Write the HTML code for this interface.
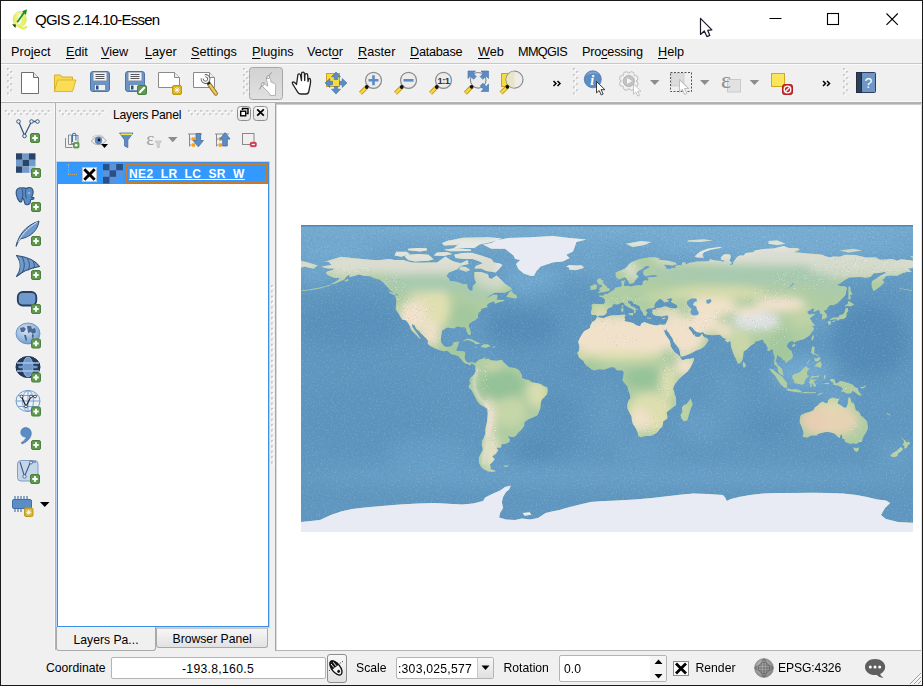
<!DOCTYPE html><html><head><meta charset="utf-8"><title>QGIS 2.14.10-Essen</title><style>
html,body{margin:0;padding:0}
body{width:923px;height:686px;position:relative;overflow:hidden;background:#f0f0f0;font-family:"Liberation Sans",sans-serif;color:#000}
.a{position:absolute}
.t{position:absolute;white-space:nowrap;line-height:1}
.menu{font-size:12.700px;top:45.700px}
.menu u{text-decoration:underline;text-underline-offset:1.500px;text-decoration-skip-ink:none;text-decoration-thickness:1px}
.tah{font-size:12px}
svg{position:absolute;overflow:visible}
</style></head><body>
<div class="a" style="left:0;top:0;width:923px;height:39px;background:#fff"></div>
<svg style="left:8px;top:6px" width="24" height="26" viewBox="0 0 24 26" ><defs><linearGradient id="qg" x1="0" y1="0" x2="1" y2="0"><stop offset="0" stop-color="#dfe95a"/><stop offset=".35" stop-color="#f3f88e"/><stop offset="1" stop-color="#e3ec5c"/></linearGradient></defs>
<path d="M11.700 5.600a6.700 7.700 0 1 0 .01 0zM12.300 7.300a2.500 5.800 8 1 1 -.01 0z" fill="url(#qg)" fill-rule="evenodd" stroke="#c9d64a" stroke-width=".4"/>
<path d="M10 19.300C12.500 22.800 16.200 23.600 18.900 20.300" fill="none" stroke="#e6ee62" stroke-width="2.500"/>
<path d="M9.300 16.200 16.200 6.300" stroke="#1d9a1d" stroke-width="1.900" fill="none"/>
<path d="M19 3.200 14.100 5.200 18 9z" fill="#169016"/>
<path d="M4.100 18.300 7.900 18.500 7.400 21.900z" fill="#0f3f0f"/></svg>
<div class="t" id="title" style="left:35px;top:11.900px;font-size:15px;letter-spacing:-0.780px">QGIS 2.14.10-Essen</div>
<svg style="left:0px;top:0px" width="923" height="38" viewBox="0 0 923 38" ><path d="M769.500 18.500h12" stroke="#000" stroke-width="1" fill="none"/>
<rect x="827.500" y="13.500" width="11" height="11" fill="none" stroke="#000" stroke-width="1.100"/>
<path d="M886.500 13.500l11.300 11.300m0-11.300l-11.300 11.300" stroke="#000" stroke-width="1.100" fill="none"/></svg>
<svg style="left:0px;top:0px" width="923" height="40" viewBox="0 0 923 40" ><path d="M700.500 18.300V34.500L704.300 31L706.900 36.600L709.800 35.400L707.700 30.300L711.900 29.900z" fill="#fff" stroke="#1a1a2a" stroke-width="1.200" stroke-linejoin="round"/></svg>
<div class="a" style="left:0;top:39px;width:923px;height:24px;background:#f0f0f0"></div>
<div class="t menu" id="m0" style="left:11px">Pro<u>j</u>ect</div><div class="t menu" id="m1" style="left:66px"><u>E</u>dit</div><div class="t menu" id="m2" style="left:101px"><u>V</u>iew</div><div class="t menu" id="m3" style="left:145px"><u>L</u>ayer</div><div class="t menu" id="m4" style="left:191px"><u>S</u>ettings</div><div class="t menu" id="m5" style="left:252px"><u>P</u>lugins</div><div class="t menu" id="m6" style="left:307px">Vect<u>o</u>r</div><div class="t menu" id="m7" style="left:358px"><u>R</u>aster</div><div class="t menu" id="m8" style="left:410px"><span style="letter-spacing:-0.25px"><u>D</u>atabase</span></div><div class="t menu" id="m9" style="left:478px"><u>W</u>eb</div><div class="t menu" id="m10" style="left:518px"><span style="letter-spacing:-0.65px">MMQGIS</span></div><div class="t menu" id="m11" style="left:582px"><span style="letter-spacing:-0.2px">Pro<u>c</u>essing</span></div><div class="t menu" id="m12" style="left:658px"><u>H</u>elp</div>
<div class="a" style="left:1px;top:63px;width:921px;height:1px;background:#c9c9c9"></div>
<div class="a" style="left:1px;top:64px;width:921px;height:1px;background:#fbfbfb"></div>
<svg style="left:7px;top:67.5px" width="7" height="33" viewBox="0 0 7 33" ><rect x="1" y="1" width="2" height="2" fill="#fff"/><rect x="0" y="0" width="2" height="2" fill="#bdbdbd" opacity=".85"/><rect x="1" y="1" width="1" height="1" fill="#e4e4e4"/><rect x="4.2" y="4" width="2" height="2" fill="#fff"/><rect x="3.2" y="3" width="2" height="2" fill="#bdbdbd" opacity=".85"/><rect x="4.2" y="4" width="1" height="1" fill="#e4e4e4"/><rect x="1" y="7.1" width="2" height="2" fill="#fff"/><rect x="0" y="6.1" width="2" height="2" fill="#bdbdbd" opacity=".85"/><rect x="1" y="7.1" width="1" height="1" fill="#e4e4e4"/><rect x="4.2" y="10.1" width="2" height="2" fill="#fff"/><rect x="3.2" y="9.1" width="2" height="2" fill="#bdbdbd" opacity=".85"/><rect x="4.2" y="10.1" width="1" height="1" fill="#e4e4e4"/><rect x="1" y="13.2" width="2" height="2" fill="#fff"/><rect x="0" y="12.2" width="2" height="2" fill="#bdbdbd" opacity=".85"/><rect x="1" y="13.2" width="1" height="1" fill="#e4e4e4"/><rect x="4.2" y="16.2" width="2" height="2" fill="#fff"/><rect x="3.2" y="15.2" width="2" height="2" fill="#bdbdbd" opacity=".85"/><rect x="4.2" y="16.2" width="1" height="1" fill="#e4e4e4"/><rect x="1" y="19.3" width="2" height="2" fill="#fff"/><rect x="0" y="18.3" width="2" height="2" fill="#bdbdbd" opacity=".85"/><rect x="1" y="19.3" width="1" height="1" fill="#e4e4e4"/><rect x="4.2" y="22.3" width="2" height="2" fill="#fff"/><rect x="3.2" y="21.3" width="2" height="2" fill="#bdbdbd" opacity=".85"/><rect x="4.2" y="22.3" width="1" height="1" fill="#e4e4e4"/><rect x="1" y="25.4" width="2" height="2" fill="#fff"/><rect x="0" y="24.4" width="2" height="2" fill="#bdbdbd" opacity=".85"/><rect x="1" y="25.4" width="1" height="1" fill="#e4e4e4"/></svg><svg style="left:0px;top:0px" width="923" height="104" viewBox="0 0 923 104" ><path d="M21.500 72.500h12l5 5v16h-17z" fill="#fff" stroke="#6e6e6e"/><path d="M33.500 72.500v5h5" fill="#e8e8e8" stroke="#6e6e6e"/><path d="M54.500 91.500v-16.500h6l1.500 2h10.500v3" fill="#f7d84f" stroke="#d4b02a"/><path d="M54.500 91.500l3-11.500h18.500l-3.500 11.500z" fill="#fbdc55" stroke="#d9b63a"/><rect x="90.5" y="71.500" width="19" height="20" rx="2.500" fill="#6b94c4" stroke="#4c74a6"/><rect x="93.5" y="72.500" width="13" height="8" fill="#f4f4f4" stroke="#bbb" stroke-width=".5"/><path d="M95.5 74.500h9M95.5 76.500h9M95.5 78.500h9" stroke="#555" stroke-width="1"/><rect x="94.5" y="84.500" width="11" height="6" fill="#efefef" stroke="#4c74a6" stroke-width=".6"/><rect x="96" y="85.500" width="2.500" height="4" fill="#2d4f7c"/><rect x="125.5" y="71.500" width="19" height="20" rx="2.500" fill="#6b94c4" stroke="#4c74a6"/><rect x="128.5" y="72.500" width="13" height="8" fill="#f4f4f4" stroke="#bbb" stroke-width=".5"/><path d="M130.5 74.500h9M130.5 76.500h9M130.5 78.500h9" stroke="#555" stroke-width="1"/><rect x="129.5" y="84.500" width="11" height="6" fill="#efefef" stroke="#4c74a6" stroke-width=".6"/><rect x="131" y="85.500" width="2.500" height="4" fill="#2d4f7c"/><rect x="137.500" y="85.500" width="9" height="9" rx="1.500" fill="#5f9a4f" stroke="#4a7f3c"/><path d="M139.800 92.200l4.400-4.400" stroke="#fff" stroke-width="2.200" stroke-linecap="round"/><path d="M158.500 72.500h16l5 5v10h-21z" fill="#fff" stroke="#8a8a8a"/><path d="M174.500 72.500v5h5" fill="#eee" stroke="#8a8a8a"/><g transform="translate(172,85)"><rect x=".5" y=".5" width="9" height="9" rx="1.500" fill="#d9b11c" stroke="#c09a12"/><path d="M5 1.9V8.1M1.9 5H8.1M2.7 2.7L7.3 7.3M7.3 2.7L2.7 7.3" stroke="#fff" stroke-width=".850" fill="none"/></g><path d="M193.500 72.500h16l5 5v10h-21z" fill="#fff" stroke="#8a8a8a"/><path d="M209.500 72.500v5h5" fill="#eee" stroke="#8a8a8a"/><path d="M209 84l6.800 9.500" stroke="#8a6d1c" stroke-width="4.200" stroke-linecap="round"/><path d="M209 84l6.800 9.500" stroke="#ecc95e" stroke-width="2.400" stroke-linecap="round"/><path d="M207.300 81.300l2 2.800" stroke="#1a1a1a" stroke-width="3.200"/><path d="M204.930 75.750A3.300 3.300 0 1 1 202.250 78.430" fill="none" stroke="#5a5a5a" stroke-width="3.200"/><path d="M204.930 75.750A3.300 3.300 0 1 1 202.250 78.430" fill="none" stroke="#f4f4f4" stroke-width="1.500"/><defs><linearGradient id="pr" x1="0" y1="0" x2="0" y2="1"><stop offset="0" stop-color="#d2d2d2"/><stop offset="1" stop-color="#e0e0e0"/></linearGradient></defs><rect x="249.500" y="67.500" width="33" height="32" rx="3" fill="url(#pr)" stroke="#a6a6a6"/><path d="M268 76.500C269.500 76.500 270.300 78 270.500 79.500L271 82L274 83.200C275.300 83.800 275.700 84.800 275.700 86L275.500 95.300L270.300 95.600L269 92.800L263 87C261.800 85.800 262 84.200 263.300 84C264.300 83.800 265 84.300 266 85L267.800 86.200L266.600 79.500C266.300 77.800 266.800 76.500 268 76.500Z" fill="#fff" stroke="#a2a2a2" stroke-width=".8" stroke-linejoin="round"/><path d="M271.800 72.300L266 79M264.200 82.200L259.300 89.400" stroke="#8a8a8a" stroke-width=".9"/><circle cx="268.200" cy="77.200" r="1.400" fill="#f2f2f2" stroke="#8a8a8a" stroke-width=".7"/><circle cx="262.600" cy="84.300" r="1.400" fill="#f2f2f2" stroke="#8a8a8a" stroke-width=".7"/><path d="M296.500 84.500c-1.200-1.700-3.300-3.300-4-2.300-.8 1 .6 2.700 1.700 4.300l3.300 5.300c.8 1.300 2 2.200 3.500 2.200h5c1.600 0 2.500-1 2.800-2.500l1.500-7.500c.4-2 .4-5.500-.6-5.700-1.100-.2-1.500 1.500-1.700 3.200l-.3-6c0-1.200-.7-1.800-1.400-1.800-.8 0-1.300.7-1.400 1.800l-.2 5-.3-6.700c0-1-.7-1.600-1.500-1.600-.8 0-1.400.7-1.400 1.700l0 6.700-1-5.400c-.2-1-.9-1.500-1.600-1.400-.8.100-1.200.9-1.100 1.900z" fill="#fff" stroke="#222" stroke-width="1.300" stroke-linejoin="round"/><rect x="326.500" y="73.500" width="13" height="13" fill="#f7dc3f" stroke="#c9a227"/><path d="M336 72l4.500 4.800h-2.800v2.700h-3.400v-2.700h-2.800zM336 94l4.500-4.800h-2.800v-2.700h-3.400v2.700h-2.800zM325 83l4.800-4.500v2.800h2.700v3.400h-2.700v2.800zM347 83l-4.800-4.500v2.800h-2.700v3.400h2.700v2.800z" fill="#5b8cc4" stroke="#3f6fa8" stroke-width=".6"/><path d="M366.78 87.02l-6.300 6.300" stroke="#c39a1e" stroke-width="4.200" stroke-linecap="butt"/><path d="M366.63 87.17l-6 6" stroke="#f7d63e" stroke-width="2.400"/><circle cx="373.5" cy="80.3" r="8" fill="#ececec" stroke="#8a8a8a" stroke-width="1.200"/><circle cx="366.78" cy="87.02" r="1.900" fill="#111"/><path d="M373.500 75.300v10M368.500 80.300h10" stroke="#5b8cc4" stroke-width="2.600"/><path d="M401.78 87.02l-6.300 6.300" stroke="#c39a1e" stroke-width="4.200" stroke-linecap="butt"/><path d="M401.63 87.17l-6 6" stroke="#f7d63e" stroke-width="2.400"/><circle cx="408.5" cy="80.3" r="8" fill="#ececec" stroke="#8a8a8a" stroke-width="1.200"/><circle cx="401.78" cy="87.02" r="1.900" fill="#111"/><path d="M403.500 80.300h10" stroke="#5b8cc4" stroke-width="2.600"/><path d="M436.78 87.02l-6.300 6.300" stroke="#c39a1e" stroke-width="4.200" stroke-linecap="butt"/><path d="M436.63 87.17l-6 6" stroke="#f7d63e" stroke-width="2.400"/><circle cx="443.5" cy="80.3" r="8" fill="#ececec" stroke="#8a8a8a" stroke-width="1.200"/><circle cx="436.78" cy="87.02" r="1.900" fill="#111"/><text x="443.500" y="84" font-family="Liberation Sans, sans-serif" font-size="9.500" font-weight="bold" text-anchor="middle" fill="#333" letter-spacing="-.5">1:1</text><path d="M471.648 86.852l-6.300 6.300" stroke="#c39a1e" stroke-width="4.200" stroke-linecap="butt"/><path d="M471.498 87.002l-6 6" stroke="#f7d63e" stroke-width="2.400"/><circle cx="478.2" cy="80.3" r="7.8" fill="#ececec" stroke="#8a8a8a" stroke-width="1.200"/><circle cx="471.648" cy="86.852" r="1.900" fill="#111"/><path d="M468 71h7.500l-2.400 2.400 3.200 3.200-2.700 2.700-3.200-3.200-2.400 2.400zM488.500 71v7.500l-2.400-2.400-3.200 3.200-2.700-2.700 3.200-3.200-2.400-2.400zM488.500 91.500h-7.500l2.400-2.400-3.200-3.200 2.700-2.700 3.200 3.200 2.400-2.400z" fill="#5b8cc4" stroke="#3f6fa8" stroke-width=".6"/><rect x="501.500" y="73.500" width="10" height="13" fill="#f7dc3f" stroke="#c9a227"/><path d="M507.36 86.74l-6.300 6.300" stroke="#c39a1e" stroke-width="4.200" stroke-linecap="butt"/><path d="M507.21 86.89l-6 6" stroke="#f7d63e" stroke-width="2.400"/><circle cx="514.5" cy="79.6" r="8.5" fill="#ececec" stroke="#8a8a8a" stroke-width="1.200"/><circle cx="507.36" cy="86.74" r="1.900" fill="#111"/><path d="M514.500 71.300a8.300 8.300 0 0 0 0 16.600z" fill="#e9e3bf" opacity=".9"/><path d="M553.500 81l2.500 2.500-2.500 2.500M557.500 81l2.500 2.500-2.500 2.500" fill="none" stroke="#000" stroke-width="1.500"/><circle cx="592.800" cy="79.300" r="8.500" fill="#5b8cc4" stroke="#4c7ab3" stroke-width=".8"/><path d="M586 76a7.500 7.500 0 0 1 13-1.500c-4-2-9-1.500-13 1.500z" fill="#8fb4dd" opacity=".7"/><text x="592.300" y="84.500" font-family="Liberation Serif, serif" font-style="italic" font-weight="bold" font-size="14" text-anchor="middle" fill="#fff">i</text><path transform="translate(596.5,81.5) scale(0.95)" d="M0 0v12l2.800-2.500 2.200 4.700 2-1-2.200-4.600h4z" fill="#fff" stroke="#333" stroke-width="1" stroke-linejoin="round"/><circle cx="635.36" cy="83.72" r="2.700" fill="#f1f1f1" stroke="#b5b5b5" stroke-width=".9"/><circle cx="631.52" cy="87.56" r="2.700" fill="#f1f1f1" stroke="#b5b5b5" stroke-width=".9"/><circle cx="626.08" cy="87.56" r="2.700" fill="#f1f1f1" stroke="#b5b5b5" stroke-width=".9"/><circle cx="622.24" cy="83.72" r="2.700" fill="#f1f1f1" stroke="#b5b5b5" stroke-width=".9"/><circle cx="622.24" cy="78.28" r="2.700" fill="#f1f1f1" stroke="#b5b5b5" stroke-width=".9"/><circle cx="626.08" cy="74.44" r="2.700" fill="#f1f1f1" stroke="#b5b5b5" stroke-width=".9"/><circle cx="631.52" cy="74.44" r="2.700" fill="#f1f1f1" stroke="#b5b5b5" stroke-width=".9"/><circle cx="635.36" cy="78.28" r="2.700" fill="#f1f1f1" stroke="#b5b5b5" stroke-width=".9"/><circle cx="628.800" cy="81" r="7.400" fill="#f1f1f1"/><circle cx="628.800" cy="81" r="5.600" fill="#c2c2c2" stroke="#adadad" stroke-width=".8"/><path d="M627 78l5.200 3-5.200 3z" fill="#f6f6f6"/><path transform="translate(633.5,84) scale(0.85)" d="M0 0v12l2.800-2.500 2.200 4.700 2-1-2.200-4.600h4z" fill="#fff" stroke="#b8b8b8" stroke-width="1" stroke-linejoin="round"/><path d="M650 80h9.5l-4.75 5z" fill="#8c8c8c"/><rect x="670.500" y="72.500" width="21" height="19" fill="#efefef" stroke="#555" stroke-dasharray="2 1.500" stroke-width="1"/><rect x="671.500" y="73.500" width="12.500" height="12.500" fill="#dcdcdc" stroke="#c4c4c4" stroke-width=".6"/><path transform="translate(679.5,79.5) scale(1.05)" d="M0 0v12l2.800-2.500 2.200 4.700 2-1-2.200-4.600h4z" fill="#fff" stroke="#c0c0c0" stroke-width="1" stroke-linejoin="round"/><path d="M700 80h9.5l-4.75 5z" fill="#8c8c8c"/><rect x="727.500" y="79.500" width="13" height="12.500" fill="#e2e2e2" stroke="#cacaca"/><text x="721" y="87.500" font-family="Liberation Serif, serif" font-size="24" fill="#8f8f8f">ε</text><path d="M749.7 80h9.5l-4.75 5z" fill="#8c8c8c"/><rect x="771.500" y="73.500" width="13" height="13" fill="#fbe55a" stroke="#cfa91f"/><rect x="782.500" y="84.500" width="10" height="10" rx="2" fill="#d9262c" stroke="#b51b20"/><circle cx="787.500" cy="89.500" r="3.300" fill="none" stroke="#fff" stroke-width="1.300"/><path d="M785.300 91.700l4.400-4.400" stroke="#fff" stroke-width="1.300"/><path d="M823 81l2.500 2.500-2.500 2.500M827 81l2.500 2.500-2.500 2.500" fill="none" stroke="#000" stroke-width="1.500"/><rect x="856.500" y="72.500" width="19" height="20" rx="1" fill="#6c97c6" stroke="#30405a"/><rect x="856.500" y="72.500" width="5" height="20" fill="#2e3f57" stroke="#222f42"/><text x="868.500" y="88" font-family="Liberation Sans, sans-serif" font-size="14" text-anchor="middle" fill="#fff">?</text></svg><svg style="left:243px;top:67.5px" width="7" height="33" viewBox="0 0 7 33" ><rect x="1" y="1" width="2" height="2" fill="#fff"/><rect x="0" y="0" width="2" height="2" fill="#bdbdbd" opacity=".85"/><rect x="1" y="1" width="1" height="1" fill="#e4e4e4"/><rect x="4.2" y="4" width="2" height="2" fill="#fff"/><rect x="3.2" y="3" width="2" height="2" fill="#bdbdbd" opacity=".85"/><rect x="4.2" y="4" width="1" height="1" fill="#e4e4e4"/><rect x="1" y="7.1" width="2" height="2" fill="#fff"/><rect x="0" y="6.1" width="2" height="2" fill="#bdbdbd" opacity=".85"/><rect x="1" y="7.1" width="1" height="1" fill="#e4e4e4"/><rect x="4.2" y="10.1" width="2" height="2" fill="#fff"/><rect x="3.2" y="9.1" width="2" height="2" fill="#bdbdbd" opacity=".85"/><rect x="4.2" y="10.1" width="1" height="1" fill="#e4e4e4"/><rect x="1" y="13.2" width="2" height="2" fill="#fff"/><rect x="0" y="12.2" width="2" height="2" fill="#bdbdbd" opacity=".85"/><rect x="1" y="13.2" width="1" height="1" fill="#e4e4e4"/><rect x="4.2" y="16.2" width="2" height="2" fill="#fff"/><rect x="3.2" y="15.2" width="2" height="2" fill="#bdbdbd" opacity=".85"/><rect x="4.2" y="16.2" width="1" height="1" fill="#e4e4e4"/><rect x="1" y="19.3" width="2" height="2" fill="#fff"/><rect x="0" y="18.3" width="2" height="2" fill="#bdbdbd" opacity=".85"/><rect x="1" y="19.3" width="1" height="1" fill="#e4e4e4"/><rect x="4.2" y="22.3" width="2" height="2" fill="#fff"/><rect x="3.2" y="21.3" width="2" height="2" fill="#bdbdbd" opacity=".85"/><rect x="4.2" y="22.3" width="1" height="1" fill="#e4e4e4"/><rect x="1" y="25.4" width="2" height="2" fill="#fff"/><rect x="0" y="24.4" width="2" height="2" fill="#bdbdbd" opacity=".85"/><rect x="1" y="25.4" width="1" height="1" fill="#e4e4e4"/></svg><svg style="left:573px;top:67.5px" width="7" height="33" viewBox="0 0 7 33" ><rect x="1" y="1" width="2" height="2" fill="#fff"/><rect x="0" y="0" width="2" height="2" fill="#bdbdbd" opacity=".85"/><rect x="1" y="1" width="1" height="1" fill="#e4e4e4"/><rect x="4.2" y="4" width="2" height="2" fill="#fff"/><rect x="3.2" y="3" width="2" height="2" fill="#bdbdbd" opacity=".85"/><rect x="4.2" y="4" width="1" height="1" fill="#e4e4e4"/><rect x="1" y="7.1" width="2" height="2" fill="#fff"/><rect x="0" y="6.1" width="2" height="2" fill="#bdbdbd" opacity=".85"/><rect x="1" y="7.1" width="1" height="1" fill="#e4e4e4"/><rect x="4.2" y="10.1" width="2" height="2" fill="#fff"/><rect x="3.2" y="9.1" width="2" height="2" fill="#bdbdbd" opacity=".85"/><rect x="4.2" y="10.1" width="1" height="1" fill="#e4e4e4"/><rect x="1" y="13.2" width="2" height="2" fill="#fff"/><rect x="0" y="12.2" width="2" height="2" fill="#bdbdbd" opacity=".85"/><rect x="1" y="13.2" width="1" height="1" fill="#e4e4e4"/><rect x="4.2" y="16.2" width="2" height="2" fill="#fff"/><rect x="3.2" y="15.2" width="2" height="2" fill="#bdbdbd" opacity=".85"/><rect x="4.2" y="16.2" width="1" height="1" fill="#e4e4e4"/><rect x="1" y="19.3" width="2" height="2" fill="#fff"/><rect x="0" y="18.3" width="2" height="2" fill="#bdbdbd" opacity=".85"/><rect x="1" y="19.3" width="1" height="1" fill="#e4e4e4"/><rect x="4.2" y="22.3" width="2" height="2" fill="#fff"/><rect x="3.2" y="21.3" width="2" height="2" fill="#bdbdbd" opacity=".85"/><rect x="4.2" y="22.3" width="1" height="1" fill="#e4e4e4"/><rect x="1" y="25.4" width="2" height="2" fill="#fff"/><rect x="0" y="24.4" width="2" height="2" fill="#bdbdbd" opacity=".85"/><rect x="1" y="25.4" width="1" height="1" fill="#e4e4e4"/></svg><svg style="left:843px;top:67.5px" width="7" height="33" viewBox="0 0 7 33" ><rect x="1" y="1" width="2" height="2" fill="#fff"/><rect x="0" y="0" width="2" height="2" fill="#bdbdbd" opacity=".85"/><rect x="1" y="1" width="1" height="1" fill="#e4e4e4"/><rect x="4.2" y="4" width="2" height="2" fill="#fff"/><rect x="3.2" y="3" width="2" height="2" fill="#bdbdbd" opacity=".85"/><rect x="4.2" y="4" width="1" height="1" fill="#e4e4e4"/><rect x="1" y="7.1" width="2" height="2" fill="#fff"/><rect x="0" y="6.1" width="2" height="2" fill="#bdbdbd" opacity=".85"/><rect x="1" y="7.1" width="1" height="1" fill="#e4e4e4"/><rect x="4.2" y="10.1" width="2" height="2" fill="#fff"/><rect x="3.2" y="9.1" width="2" height="2" fill="#bdbdbd" opacity=".85"/><rect x="4.2" y="10.1" width="1" height="1" fill="#e4e4e4"/><rect x="1" y="13.2" width="2" height="2" fill="#fff"/><rect x="0" y="12.2" width="2" height="2" fill="#bdbdbd" opacity=".85"/><rect x="1" y="13.2" width="1" height="1" fill="#e4e4e4"/><rect x="4.2" y="16.2" width="2" height="2" fill="#fff"/><rect x="3.2" y="15.2" width="2" height="2" fill="#bdbdbd" opacity=".85"/><rect x="4.2" y="16.2" width="1" height="1" fill="#e4e4e4"/><rect x="1" y="19.3" width="2" height="2" fill="#fff"/><rect x="0" y="18.3" width="2" height="2" fill="#bdbdbd" opacity=".85"/><rect x="1" y="19.3" width="1" height="1" fill="#e4e4e4"/><rect x="4.2" y="22.3" width="2" height="2" fill="#fff"/><rect x="3.2" y="21.3" width="2" height="2" fill="#bdbdbd" opacity=".85"/><rect x="4.2" y="22.3" width="1" height="1" fill="#e4e4e4"/><rect x="1" y="25.4" width="2" height="2" fill="#fff"/><rect x="0" y="24.4" width="2" height="2" fill="#bdbdbd" opacity=".85"/><rect x="1" y="25.4" width="1" height="1" fill="#e4e4e4"/></svg>
<div class="a" style="left:1px;top:101px;width:921px;height:1px;background:#f9f9f9"></div><div class="a" style="left:1px;top:102px;width:921px;height:1px;background:#b2b2b2"></div>
<div class="a" style="left:54px;top:103px;width:1px;height:547px;background:#f8f8f8"></div><div class="a" style="left:55px;top:103px;width:1px;height:547px;background:#b2b2b2"></div><svg style="left:4.5px;top:109.5px" width="51" height="7" viewBox="0 0 51 7" ><rect x="1" y="1" width="2" height="2" fill="#fff"/><rect x="0" y="0" width="2" height="2" fill="#bdbdbd" opacity=".85"/><rect x="1" y="1" width="1" height="1" fill="#e4e4e4"/><rect x="4" y="4.2" width="2" height="2" fill="#fff"/><rect x="3" y="3.2" width="2" height="2" fill="#bdbdbd" opacity=".85"/><rect x="4" y="4.2" width="1" height="1" fill="#e4e4e4"/><rect x="7.1" y="1" width="2" height="2" fill="#fff"/><rect x="6.1" y="0" width="2" height="2" fill="#bdbdbd" opacity=".85"/><rect x="7.1" y="1" width="1" height="1" fill="#e4e4e4"/><rect x="10.1" y="4.2" width="2" height="2" fill="#fff"/><rect x="9.1" y="3.2" width="2" height="2" fill="#bdbdbd" opacity=".85"/><rect x="10.1" y="4.2" width="1" height="1" fill="#e4e4e4"/><rect x="13.2" y="1" width="2" height="2" fill="#fff"/><rect x="12.2" y="0" width="2" height="2" fill="#bdbdbd" opacity=".85"/><rect x="13.2" y="1" width="1" height="1" fill="#e4e4e4"/><rect x="16.2" y="4.2" width="2" height="2" fill="#fff"/><rect x="15.2" y="3.2" width="2" height="2" fill="#bdbdbd" opacity=".85"/><rect x="16.2" y="4.2" width="1" height="1" fill="#e4e4e4"/><rect x="19.3" y="1" width="2" height="2" fill="#fff"/><rect x="18.3" y="0" width="2" height="2" fill="#bdbdbd" opacity=".85"/><rect x="19.3" y="1" width="1" height="1" fill="#e4e4e4"/><rect x="22.3" y="4.2" width="2" height="2" fill="#fff"/><rect x="21.3" y="3.2" width="2" height="2" fill="#bdbdbd" opacity=".85"/><rect x="22.3" y="4.2" width="1" height="1" fill="#e4e4e4"/><rect x="25.4" y="1" width="2" height="2" fill="#fff"/><rect x="24.4" y="0" width="2" height="2" fill="#bdbdbd" opacity=".85"/><rect x="25.4" y="1" width="1" height="1" fill="#e4e4e4"/><rect x="28.4" y="4.2" width="2" height="2" fill="#fff"/><rect x="27.4" y="3.2" width="2" height="2" fill="#bdbdbd" opacity=".85"/><rect x="28.4" y="4.2" width="1" height="1" fill="#e4e4e4"/><rect x="31.5" y="1" width="2" height="2" fill="#fff"/><rect x="30.5" y="0" width="2" height="2" fill="#bdbdbd" opacity=".85"/><rect x="31.5" y="1" width="1" height="1" fill="#e4e4e4"/><rect x="34.5" y="4.2" width="2" height="2" fill="#fff"/><rect x="33.5" y="3.2" width="2" height="2" fill="#bdbdbd" opacity=".85"/><rect x="34.5" y="4.2" width="1" height="1" fill="#e4e4e4"/><rect x="37.6" y="1" width="2" height="2" fill="#fff"/><rect x="36.6" y="0" width="2" height="2" fill="#bdbdbd" opacity=".85"/><rect x="37.6" y="1" width="1" height="1" fill="#e4e4e4"/><rect x="40.6" y="4.2" width="2" height="2" fill="#fff"/><rect x="39.6" y="3.2" width="2" height="2" fill="#bdbdbd" opacity=".85"/><rect x="40.6" y="4.2" width="1" height="1" fill="#e4e4e4"/><rect x="43.7" y="1" width="2" height="2" fill="#fff"/><rect x="42.7" y="0" width="2" height="2" fill="#bdbdbd" opacity=".85"/><rect x="43.7" y="1" width="1" height="1" fill="#e4e4e4"/></svg><svg style="left:0px;top:0px" width="56" height="520" viewBox="0 0 56 520" ><path d="M19 122.500l5.500 13 6.500-13M32.500 121.500h4" fill="none" stroke="#3c5a80" stroke-width="1.300"/><circle cx="18.500" cy="121.500" r="1.800" fill="#f0f0f0" stroke="#3c5a80" stroke-width="1"/><circle cx="31.500" cy="121.500" r="1.800" fill="#f0f0f0" stroke="#3c5a80" stroke-width="1"/><circle cx="37.500" cy="121.500" r="1.800" fill="#f0f0f0" stroke="#3c5a80" stroke-width="1"/><circle cx="24.500" cy="136" r="1.800" fill="#f0f0f0" stroke="#3c5a80" stroke-width="1"/><g transform="translate(30,133)"><rect x=".5" y=".5" width="9" height="9" rx="1.500" fill="#5f9a4f" stroke="#4a7f3c"/><path d="M5 2.300v5.4M2.300 5h5.4" stroke="#fff" stroke-width="2" fill="none"/></g><rect x="16" y="153.3" width="6.5" height="6.5" fill="#2a4468"/><rect x="22.5" y="153.3" width="6.5" height="6.5" fill="#6f9acb"/><rect x="29" y="153.3" width="6.5" height="6.5" fill="#2a4468"/><rect x="16" y="159.8" width="6.5" height="6.5" fill="#6f9acb"/><rect x="22.5" y="159.8" width="6.5" height="6.5" fill="#2a4468"/><rect x="29" y="159.8" width="6.5" height="6.5" fill="#6f9acb"/><rect x="16" y="166.3" width="6.5" height="6.5" fill="#2a4468"/><rect x="22.5" y="166.3" width="6.5" height="6.5" fill="#6f9acb"/><rect x="29" y="166.3" width="6.5" height="6.5" fill="#a9c4e4"/><g transform="translate(31,168)"><rect x=".5" y=".5" width="9" height="9" rx="1.500" fill="#5f9a4f" stroke="#4a7f3c"/><path d="M5 2.300v5.4M2.300 5h5.4" stroke="#fff" stroke-width="2" fill="none"/></g><path d="M22 188c-4-1-6.500 2-5.800 6 .5 3 1.800 6 3.300 7.500 1 1 2.500.5 2.500-1l.3-3c2 1.500 2 3.500 2.500 6 .3 1.500 3.500 2 5 0 .8-1 .5-3 1-4 2 0 3.500-.5 3.200-1.500-.2-.7-2-.5-2.700-.7 2.500-3 2.500-8 0-9.300-2-1-4-.3-5 .5-1.200-.7-2.800-.8-4.300-.5z" fill="#5b8cc4" stroke="#2f4f7a" stroke-width="1.100" stroke-linejoin="round"/><path d="M26.300 188.500c-1.500 3-1 7 .2 10M22.500 197c.5-3 .3-6-.5-8" fill="none" stroke="#2f4f7a" stroke-width=".9"/><circle cx="29" cy="193" r=".7" fill="#fff"/><g transform="translate(31,202)"><rect x=".5" y=".5" width="9" height="9" rx="1.500" fill="#5f9a4f" stroke="#4a7f3c"/><path d="M5 2.300v5.4M2.300 5h5.4" stroke="#fff" stroke-width="2" fill="none"/></g><path d="M16.500 245c2-9 8-19 22.500-24-1 9-8 16-19 18z" fill="#6f9acb" stroke="#2f4f7a" stroke-width="1" stroke-linejoin="round"/><path d="M16.500 245c4-9 11-17 21-23" fill="none" stroke="#dfe9f5" stroke-width=".9"/><path d="M16 246.500l1.500-4.500" stroke="#2f4f7a" stroke-width="1.200"/><g transform="translate(31,236)"><rect x=".5" y=".5" width="9" height="9" rx="1.500" fill="#5f9a4f" stroke="#4a7f3c"/><path d="M5 2.300v5.4M2.300 5h5.4" stroke="#fff" stroke-width="2" fill="none"/></g><path d="M16.500 255.500c8 1 18 4 23 11-6 1-16 4-23 10 5-8 5-14 0-21z" fill="#6f9acb" stroke="#2f4f7a" stroke-width="1.100" stroke-linejoin="round"/><path d="M22 257c3 5 3 11 0 16M27.500 259c2.500 4 2.500 8 .5 11.500M33 261.500c1.700 2.500 1.700 5 .5 7" fill="none" stroke="#2f4f7a" stroke-width=".9"/><g transform="translate(31,270)"><rect x=".5" y=".5" width="9" height="9" rx="1.500" fill="#5f9a4f" stroke="#4a7f3c"/><path d="M5 2.300v5.4M2.300 5h5.4" stroke="#fff" stroke-width="2" fill="none"/></g><rect x="17.800" y="292" width="18.500" height="13.500" rx="5" fill="#6f9acb" stroke="#253e62" stroke-width="1.800"/><g transform="translate(31,304)"><rect x=".5" y=".5" width="9" height="9" rx="1.500" fill="#5f9a4f" stroke="#4a7f3c"/><path d="M5 2.300v5.4M2.300 5h5.4" stroke="#fff" stroke-width="2" fill="none"/></g><defs><radialGradient id="gl1" cx=".4" cy=".35" r=".7"><stop offset="0" stop-color="#dbe8f7"/><stop offset="1" stop-color="#6f9acb"/></radialGradient></defs><ellipse cx="28" cy="333.500" rx="12" ry="10.500" fill="url(#gl1)" stroke="#5b8cc4" stroke-width=".8"/><path d="M20 328l4-1 2 2-2 3-3 0zM27 326l4 0 1 3 3-1 1 4-3 2-2-2-3 1zM24 335l2 0 1 4-1 3zM32 334l2 1-1 4-1-2z" fill="#2f4f7a" opacity=".8"/><g transform="translate(31,338.5)"><rect x=".5" y=".5" width="9" height="9" rx="1.500" fill="#5f9a4f" stroke="#4a7f3c"/><path d="M5 2.300v5.4M2.300 5h5.4" stroke="#fff" stroke-width="2" fill="none"/></g><ellipse cx="28" cy="367" rx="12" ry="10.500" fill="#223a5e" stroke="#1b2d4a" stroke-width="1"/><ellipse cx="28" cy="367" rx="5" ry="10" fill="#6f9acb" stroke="#a9c4e4" stroke-width=".8"/><path d="M17 363h22M17 371h22" stroke="#a9c4e4" stroke-width="1.600"/><path d="M18.500 367h19" stroke="#6f9acb" stroke-width="2.500"/><g transform="translate(31,372.5)"><rect x=".5" y=".5" width="9" height="9" rx="1.500" fill="#5f9a4f" stroke="#4a7f3c"/><path d="M5 2.300v5.4M2.300 5h5.4" stroke="#fff" stroke-width="2" fill="none"/></g><ellipse cx="28" cy="401" rx="12" ry="10.500" fill="#eaf1fa" stroke="#6f9acb" stroke-width="1"/><ellipse cx="28" cy="401" rx="5.500" ry="10.500" fill="none" stroke="#6f9acb" stroke-width=".9"/><path d="M16 401h24M18 395.500h20M18 406.500h20M28 390.500v21" stroke="#6f9acb" stroke-width=".9"/><path d="M21.500 396.500l4.500 10 5-10M31.500 396.500h3.500" fill="none" stroke="#222" stroke-width="1.200"/><circle cx="21.500" cy="396.500" r="1.400" fill="#fff" stroke="#222" stroke-width=".8"/><circle cx="31" cy="396.500" r="1.400" fill="#fff" stroke="#222" stroke-width=".8"/><circle cx="35" cy="396.500" r="1.400" fill="#fff" stroke="#222" stroke-width=".8"/><circle cx="26" cy="406.500" r="1.400" fill="#fff" stroke="#222" stroke-width=".8"/><g transform="translate(31,406.5)"><rect x=".5" y=".5" width="9" height="9" rx="1.500" fill="#5f9a4f" stroke="#4a7f3c"/><path d="M5 2.300v5.4M2.300 5h5.4" stroke="#fff" stroke-width="2" fill="none"/></g><path d="M25.500 427.600c3.400 0 5.800 2.300 5.800 5.600 0 4.500-3.800 8.500-9.300 10.700l-.7-1.300c2.800-1.700 4.500-3.600 5-5.700-3 .6-5.500-1.300-5.500-4.300 0-2.800 2-5 4.700-5z" fill="#5b8cc4" stroke="#3f6fa8" stroke-width=".6"/><g transform="translate(31,440)"><rect x=".5" y=".5" width="9" height="9" rx="1.500" fill="#5f9a4f" stroke="#4a7f3c"/><path d="M5 2.300v5.4M2.300 5h5.4" stroke="#fff" stroke-width="2" fill="none"/></g><rect x="17.500" y="460.500" width="20.500" height="20.500" rx="3.500" fill="#c4d6ea" stroke="#7f9fc4" stroke-width="1"/><path d="M20 462l4.500 14.500 6-14.500M31 462h5" fill="none" stroke="#3c5a80" stroke-width="1.100"/><circle cx="31" cy="462.500" r="1.500" fill="#dfe9f5" stroke="#3c5a80" stroke-width=".8"/><circle cx="24.500" cy="476.500" r="1.700" fill="#dfe9f5" stroke="#3c5a80" stroke-width=".8"/><g transform="translate(30,474)"><rect x=".5" y=".5" width="9" height="9" rx="1.500" fill="#5f9a4f" stroke="#4a7f3c"/><path d="M5 2.300v5.4M2.300 5h5.4" stroke="#fff" stroke-width="2" fill="none"/></g><path d="M15 496v4M18 496v4M21 496v4M24 496v4M27 496v4M15 508v4M18 508v4M21 508v4" stroke="#3f6fa8" stroke-width="1.100"/><rect x="12.500" y="499.500" width="19" height="9" rx="1.500" fill="#5b8cc4" stroke="#3f6fa8"/><g transform="translate(24,507.5)"><rect x=".5" y=".5" width="8.5" height="8.5" rx="1.500" fill="#d9b11c" stroke="#c09a12"/><path d="M4.75 1.9V7.6M1.9 4.75H7.6M2.7 2.7L6.8 6.8M6.8 2.7L2.7 6.8" stroke="#fff" stroke-width=".850" fill="none"/></g><path d="M40 502h9.5l-4.75 5z" fill="#000"/></svg>
<svg style="left:58.5px;top:110px" width="51" height="7" viewBox="0 0 51 7" ><rect x="1" y="1" width="2" height="2" fill="#fff"/><rect x="0" y="0" width="2" height="2" fill="#bdbdbd" opacity=".85"/><rect x="1" y="1" width="1" height="1" fill="#e4e4e4"/><rect x="4" y="4.2" width="2" height="2" fill="#fff"/><rect x="3" y="3.2" width="2" height="2" fill="#bdbdbd" opacity=".85"/><rect x="4" y="4.2" width="1" height="1" fill="#e4e4e4"/><rect x="7.1" y="1" width="2" height="2" fill="#fff"/><rect x="6.1" y="0" width="2" height="2" fill="#bdbdbd" opacity=".85"/><rect x="7.1" y="1" width="1" height="1" fill="#e4e4e4"/><rect x="10.1" y="4.2" width="2" height="2" fill="#fff"/><rect x="9.1" y="3.2" width="2" height="2" fill="#bdbdbd" opacity=".85"/><rect x="10.1" y="4.2" width="1" height="1" fill="#e4e4e4"/><rect x="13.2" y="1" width="2" height="2" fill="#fff"/><rect x="12.2" y="0" width="2" height="2" fill="#bdbdbd" opacity=".85"/><rect x="13.2" y="1" width="1" height="1" fill="#e4e4e4"/><rect x="16.2" y="4.2" width="2" height="2" fill="#fff"/><rect x="15.2" y="3.2" width="2" height="2" fill="#bdbdbd" opacity=".85"/><rect x="16.2" y="4.2" width="1" height="1" fill="#e4e4e4"/><rect x="19.3" y="1" width="2" height="2" fill="#fff"/><rect x="18.3" y="0" width="2" height="2" fill="#bdbdbd" opacity=".85"/><rect x="19.3" y="1" width="1" height="1" fill="#e4e4e4"/><rect x="22.3" y="4.2" width="2" height="2" fill="#fff"/><rect x="21.3" y="3.2" width="2" height="2" fill="#bdbdbd" opacity=".85"/><rect x="22.3" y="4.2" width="1" height="1" fill="#e4e4e4"/><rect x="25.4" y="1" width="2" height="2" fill="#fff"/><rect x="24.4" y="0" width="2" height="2" fill="#bdbdbd" opacity=".85"/><rect x="25.4" y="1" width="1" height="1" fill="#e4e4e4"/><rect x="28.4" y="4.2" width="2" height="2" fill="#fff"/><rect x="27.4" y="3.2" width="2" height="2" fill="#bdbdbd" opacity=".85"/><rect x="28.4" y="4.2" width="1" height="1" fill="#e4e4e4"/><rect x="31.5" y="1" width="2" height="2" fill="#fff"/><rect x="30.5" y="0" width="2" height="2" fill="#bdbdbd" opacity=".85"/><rect x="31.5" y="1" width="1" height="1" fill="#e4e4e4"/><rect x="34.5" y="4.2" width="2" height="2" fill="#fff"/><rect x="33.5" y="3.2" width="2" height="2" fill="#bdbdbd" opacity=".85"/><rect x="34.5" y="4.2" width="1" height="1" fill="#e4e4e4"/><rect x="37.6" y="1" width="2" height="2" fill="#fff"/><rect x="36.6" y="0" width="2" height="2" fill="#bdbdbd" opacity=".85"/><rect x="37.6" y="1" width="1" height="1" fill="#e4e4e4"/><rect x="40.6" y="4.2" width="2" height="2" fill="#fff"/><rect x="39.6" y="3.2" width="2" height="2" fill="#bdbdbd" opacity=".85"/><rect x="40.6" y="4.2" width="1" height="1" fill="#e4e4e4"/><rect x="43.7" y="1" width="2" height="2" fill="#fff"/><rect x="42.7" y="0" width="2" height="2" fill="#bdbdbd" opacity=".85"/><rect x="43.7" y="1" width="1" height="1" fill="#e4e4e4"/></svg><svg style="left:187.5px;top:110px" width="51" height="7" viewBox="0 0 51 7" ><rect x="1" y="1" width="2" height="2" fill="#fff"/><rect x="0" y="0" width="2" height="2" fill="#bdbdbd" opacity=".85"/><rect x="1" y="1" width="1" height="1" fill="#e4e4e4"/><rect x="4" y="4.2" width="2" height="2" fill="#fff"/><rect x="3" y="3.2" width="2" height="2" fill="#bdbdbd" opacity=".85"/><rect x="4" y="4.2" width="1" height="1" fill="#e4e4e4"/><rect x="7.1" y="1" width="2" height="2" fill="#fff"/><rect x="6.1" y="0" width="2" height="2" fill="#bdbdbd" opacity=".85"/><rect x="7.1" y="1" width="1" height="1" fill="#e4e4e4"/><rect x="10.1" y="4.2" width="2" height="2" fill="#fff"/><rect x="9.1" y="3.2" width="2" height="2" fill="#bdbdbd" opacity=".85"/><rect x="10.1" y="4.2" width="1" height="1" fill="#e4e4e4"/><rect x="13.2" y="1" width="2" height="2" fill="#fff"/><rect x="12.2" y="0" width="2" height="2" fill="#bdbdbd" opacity=".85"/><rect x="13.2" y="1" width="1" height="1" fill="#e4e4e4"/><rect x="16.2" y="4.2" width="2" height="2" fill="#fff"/><rect x="15.2" y="3.2" width="2" height="2" fill="#bdbdbd" opacity=".85"/><rect x="16.2" y="4.2" width="1" height="1" fill="#e4e4e4"/><rect x="19.3" y="1" width="2" height="2" fill="#fff"/><rect x="18.3" y="0" width="2" height="2" fill="#bdbdbd" opacity=".85"/><rect x="19.3" y="1" width="1" height="1" fill="#e4e4e4"/><rect x="22.3" y="4.2" width="2" height="2" fill="#fff"/><rect x="21.3" y="3.2" width="2" height="2" fill="#bdbdbd" opacity=".85"/><rect x="22.3" y="4.2" width="1" height="1" fill="#e4e4e4"/><rect x="25.4" y="1" width="2" height="2" fill="#fff"/><rect x="24.4" y="0" width="2" height="2" fill="#bdbdbd" opacity=".85"/><rect x="25.4" y="1" width="1" height="1" fill="#e4e4e4"/><rect x="28.4" y="4.2" width="2" height="2" fill="#fff"/><rect x="27.4" y="3.2" width="2" height="2" fill="#bdbdbd" opacity=".85"/><rect x="28.4" y="4.2" width="1" height="1" fill="#e4e4e4"/><rect x="31.5" y="1" width="2" height="2" fill="#fff"/><rect x="30.5" y="0" width="2" height="2" fill="#bdbdbd" opacity=".85"/><rect x="31.5" y="1" width="1" height="1" fill="#e4e4e4"/><rect x="34.5" y="4.2" width="2" height="2" fill="#fff"/><rect x="33.5" y="3.2" width="2" height="2" fill="#bdbdbd" opacity=".85"/><rect x="34.5" y="4.2" width="1" height="1" fill="#e4e4e4"/><rect x="37.6" y="1" width="2" height="2" fill="#fff"/><rect x="36.6" y="0" width="2" height="2" fill="#bdbdbd" opacity=".85"/><rect x="37.6" y="1" width="1" height="1" fill="#e4e4e4"/><rect x="40.6" y="4.2" width="2" height="2" fill="#fff"/><rect x="39.6" y="3.2" width="2" height="2" fill="#bdbdbd" opacity=".85"/><rect x="40.6" y="4.2" width="1" height="1" fill="#e4e4e4"/><rect x="43.7" y="1" width="2" height="2" fill="#fff"/><rect x="42.7" y="0" width="2" height="2" fill="#bdbdbd" opacity=".85"/><rect x="43.7" y="1" width="1" height="1" fill="#e4e4e4"/></svg><div class="t tah" id="lptitle" style="left:113px;top:108.500px;font-size:12.200px;letter-spacing:-0.250px">Layers Panel</div><svg style="left:0px;top:0px" width="280" height="160" viewBox="0 0 280 160" ><defs><linearGradient id="bt" x1="0" y1="0" x2="0" y2="1"><stop offset="0" stop-color="#f8f8f8"/><stop offset="1" stop-color="#e4e4e4"/></linearGradient></defs><rect x="237.500" y="106.500" width="13" height="14" rx="3" fill="url(#bt)" stroke="#8e8e8e"/><rect x="253.500" y="106.500" width="14" height="14" rx="3" fill="url(#bt)" stroke="#8e8e8e"/><path d="M242.500 110v-1.500h5.500v5h-1.500" fill="none" stroke="#000" stroke-width="1.400"/><rect x="240.700" y="111.200" width="5" height="4.600" fill="#fff" stroke="#000" stroke-width="1.400"/><path d="M257.200 109.300l6.600 6.400m0-6.400l-6.600 6.400" stroke="#000" stroke-width="1.800"/><path d="M65.500 147.500v-9.500M65.500 147.500h7" fill="none" stroke="#8a8a8a"/><path d="M68.500 144.500v-9.500h3M68.500 144.500h5.500" fill="none" stroke="#8a8a8a"/><rect x="71.500" y="135.500" width="6.500" height="8" fill="#f3f3f3" stroke="#8a8a8a"/><path d="M72.500 142v-7a1.700 1.700 0 0 1 3.400 0v5.500" fill="none" stroke="#3f6fa8" stroke-width="1.100"/><rect x="73.500" y="142.500" width="5.500" height="5.500" rx="1" fill="#6aa55a" stroke="#4a7f3c" stroke-width=".7"/><circle cx="76.200" cy="145.200" r="1.300" fill="#fff"/><path d="M91.500 141c3-5 11-6 14.500-.5-3.500 5.500-11 5.500-14.500.5z" fill="#f4f4f4" stroke="#9a9a9a" stroke-width=".9"/><path d="M92 137.500c4-3 9-3 12 0" fill="none" stroke="#bdbdbd" stroke-width=".8"/><circle cx="98.500" cy="140.500" r="3.400" fill="#5b8cc4" stroke="#3f6fa8" stroke-width=".6"/><circle cx="99" cy="140" r="1.400" fill="#111"/><path d="M101 144h7l-3.5 4z" fill="#000"/><path d="M119.500 133h13.500l-5.200 7v7.500l-3.200-1.500v-6z" fill="#5b8cc4" stroke="#3f6fa8" stroke-width=".8" stroke-linejoin="round"/><path d="M120.500 134.300h11.500" stroke="#f5e04a" stroke-width="1.600"/><text x="146.300" y="144.500" font-family="Liberation Serif, serif" font-size="19" fill="#a0a0a0">ε</text><path d="M155 141h6.500l-2 3v3.500h-2.500v-3.500z" fill="#d0d0d0" stroke="#c0c0c0" stroke-width=".6"/><path d="M168 137h9.5l-4.75 5.3z" fill="#8c8c8c"/><path d="M188 134h14M189.5 134v12.500M189.5 139h2M189.5 145h2" fill="none" stroke="#8a8a8a" stroke-width="1"/><rect x="191.8" y="137.300" width="3.400" height="3.400" fill="#f7a11a"/><rect x="191.8" y="143.300" width="3.400" height="3.400" fill="#f7a11a"/><path d="M196 133.500h4.600v7h2.800l-5.100 6.300-5.100-6.300h2.800z" fill="#5b8cc4" stroke="#3f6fa8" stroke-width=".8" stroke-linejoin="round"/><path d="M215 134h14M216.5 134v12.500M216.5 139h2M216.5 145h2" fill="none" stroke="#8a8a8a" stroke-width="1"/><rect x="218.8" y="137.300" width="3.400" height="3.400" fill="#f7a11a"/><rect x="218.8" y="143.300" width="3.400" height="3.400" fill="#f7a11a"/><path d="M222.700 146h4.600v-7h2.800l-5.100-6.300-5.100 6.300h2.800z" fill="#5b8cc4" stroke="#3f6fa8" stroke-width=".8" stroke-linejoin="round"/><rect x="242.500" y="133.500" width="11.500" height="11" fill="#f0f0f0" stroke="#8a8a8a"/><rect x="250.300" y="142.300" width="6" height="4.400" rx="1" fill="#e8384a" stroke="#c92336" stroke-width=".6"/><path d="M251.700 144.500h3.200" stroke="#fff" stroke-width="1.200"/></svg><div class="a" style="left:57px;top:162px;width:211.500px;height:465px;box-sizing:border-box;border:1px solid #3c8fe6;background:#fff;box-shadow:0 0 0 1px #b9d7f5"></div><div class="a" style="left:58px;top:163px;width:209.500px;height:21px;background:#3399ff"></div><div class="a" style="left:68px;top:164px;width:0;height:10px;border-left:1px dotted #c9a777"></div><div class="a" style="left:68px;top:174px;width:9px;height:0;border-top:1px dotted #c9a777"></div><div class="a" style="left:82px;top:167px;width:15px;height:15px;box-sizing:border-box;background:#fff;border:1px solid #c4c8cc"></div><svg style="left:82px;top:167px" width="15" height="15" viewBox="0 0 15 15" ><path d="M2.300 2.300l10.400 10.400m0-10.400l-10.400 10.400" stroke="#000" stroke-width="2.900"/></svg><svg style="left:103px;top:164px" width="20" height="19.5" viewBox="0 0 20 19.5" ><rect x="0" y="0" width="6.700" height="6.700" fill="#2a4f86"/><rect x="6.6" y="0" width="6.700" height="6.700" fill="#5c93d8"/><rect x="13.2" y="0" width="6.700" height="6.700" fill="#2a4f86"/><rect x="0" y="6.4" width="6.700" height="6.700" fill="#5c93d8"/><rect x="6.6" y="6.4" width="6.700" height="6.700" fill="#2a4f86"/><rect x="13.2" y="6.4" width="6.700" height="6.700" fill="#5c93d8"/><rect x="0" y="12.8" width="6.700" height="6.700" fill="#2a4f86"/><rect x="6.6" y="12.8" width="6.700" height="6.700" fill="#5c93d8"/><rect x="13.2" y="12.8" width="6.700" height="6.700" fill="#3d9bff"/></svg><div class="a" style="left:126px;top:164px;width:141px;height:19px;box-sizing:border-box;border:1px dotted #cc7f33"></div><div class="t" id="lyr" style="left:129px;top:167.500px;font-size:12px;font-weight:bold;color:#fff;text-decoration:underline;letter-spacing:0.410px;word-spacing:0">NE2_LR_LC_SR_W</div><svg style="left:271px;top:285px" width="4" height="182" viewBox="0 0 4 182" ><rect x="1" y="1" width="2" height="2" fill="#fff"/><rect x="0" y="0" width="2" height="2" fill="#bdbdbd" opacity=".85"/><rect x="1" y="1" width="1" height="1" fill="#e4e4e4"/><rect x="1" y="6.3" width="2" height="2" fill="#fff"/><rect x="0" y="5.3" width="2" height="2" fill="#bdbdbd" opacity=".85"/><rect x="1" y="6.3" width="1" height="1" fill="#e4e4e4"/><rect x="1" y="11.7" width="2" height="2" fill="#fff"/><rect x="0" y="10.7" width="2" height="2" fill="#bdbdbd" opacity=".85"/><rect x="1" y="11.7" width="1" height="1" fill="#e4e4e4"/><rect x="1" y="17" width="2" height="2" fill="#fff"/><rect x="0" y="16" width="2" height="2" fill="#bdbdbd" opacity=".85"/><rect x="1" y="17" width="1" height="1" fill="#e4e4e4"/><rect x="1" y="22.4" width="2" height="2" fill="#fff"/><rect x="0" y="21.4" width="2" height="2" fill="#bdbdbd" opacity=".85"/><rect x="1" y="22.4" width="1" height="1" fill="#e4e4e4"/><rect x="1" y="27.8" width="2" height="2" fill="#fff"/><rect x="0" y="26.8" width="2" height="2" fill="#bdbdbd" opacity=".85"/><rect x="1" y="27.8" width="1" height="1" fill="#e4e4e4"/><rect x="1" y="33.1" width="2" height="2" fill="#fff"/><rect x="0" y="32.1" width="2" height="2" fill="#bdbdbd" opacity=".85"/><rect x="1" y="33.1" width="1" height="1" fill="#e4e4e4"/><rect x="1" y="38.4" width="2" height="2" fill="#fff"/><rect x="0" y="37.4" width="2" height="2" fill="#bdbdbd" opacity=".85"/><rect x="1" y="38.4" width="1" height="1" fill="#e4e4e4"/><rect x="1" y="43.8" width="2" height="2" fill="#fff"/><rect x="0" y="42.8" width="2" height="2" fill="#bdbdbd" opacity=".85"/><rect x="1" y="43.8" width="1" height="1" fill="#e4e4e4"/><rect x="1" y="49.1" width="2" height="2" fill="#fff"/><rect x="0" y="48.1" width="2" height="2" fill="#bdbdbd" opacity=".85"/><rect x="1" y="49.1" width="1" height="1" fill="#e4e4e4"/><rect x="1" y="54.5" width="2" height="2" fill="#fff"/><rect x="0" y="53.5" width="2" height="2" fill="#bdbdbd" opacity=".85"/><rect x="1" y="54.5" width="1" height="1" fill="#e4e4e4"/><rect x="1" y="59.8" width="2" height="2" fill="#fff"/><rect x="0" y="58.8" width="2" height="2" fill="#bdbdbd" opacity=".85"/><rect x="1" y="59.8" width="1" height="1" fill="#e4e4e4"/><rect x="1" y="65.2" width="2" height="2" fill="#fff"/><rect x="0" y="64.2" width="2" height="2" fill="#bdbdbd" opacity=".85"/><rect x="1" y="65.2" width="1" height="1" fill="#e4e4e4"/><rect x="1" y="70.5" width="2" height="2" fill="#fff"/><rect x="0" y="69.5" width="2" height="2" fill="#bdbdbd" opacity=".85"/><rect x="1" y="70.5" width="1" height="1" fill="#e4e4e4"/><rect x="1" y="75.9" width="2" height="2" fill="#fff"/><rect x="0" y="74.9" width="2" height="2" fill="#bdbdbd" opacity=".85"/><rect x="1" y="75.9" width="1" height="1" fill="#e4e4e4"/><rect x="1" y="81.2" width="2" height="2" fill="#fff"/><rect x="0" y="80.2" width="2" height="2" fill="#bdbdbd" opacity=".85"/><rect x="1" y="81.2" width="1" height="1" fill="#e4e4e4"/><rect x="1" y="86.6" width="2" height="2" fill="#fff"/><rect x="0" y="85.6" width="2" height="2" fill="#bdbdbd" opacity=".85"/><rect x="1" y="86.6" width="1" height="1" fill="#e4e4e4"/><rect x="1" y="91.9" width="2" height="2" fill="#fff"/><rect x="0" y="90.9" width="2" height="2" fill="#bdbdbd" opacity=".85"/><rect x="1" y="91.9" width="1" height="1" fill="#e4e4e4"/><rect x="1" y="97.3" width="2" height="2" fill="#fff"/><rect x="0" y="96.3" width="2" height="2" fill="#bdbdbd" opacity=".85"/><rect x="1" y="97.3" width="1" height="1" fill="#e4e4e4"/><rect x="1" y="102.6" width="2" height="2" fill="#fff"/><rect x="0" y="101.6" width="2" height="2" fill="#bdbdbd" opacity=".85"/><rect x="1" y="102.6" width="1" height="1" fill="#e4e4e4"/><rect x="1" y="108" width="2" height="2" fill="#fff"/><rect x="0" y="107" width="2" height="2" fill="#bdbdbd" opacity=".85"/><rect x="1" y="108" width="1" height="1" fill="#e4e4e4"/><rect x="1" y="113.3" width="2" height="2" fill="#fff"/><rect x="0" y="112.3" width="2" height="2" fill="#bdbdbd" opacity=".85"/><rect x="1" y="113.3" width="1" height="1" fill="#e4e4e4"/><rect x="1" y="118.7" width="2" height="2" fill="#fff"/><rect x="0" y="117.7" width="2" height="2" fill="#bdbdbd" opacity=".85"/><rect x="1" y="118.7" width="1" height="1" fill="#e4e4e4"/><rect x="1" y="124" width="2" height="2" fill="#fff"/><rect x="0" y="123" width="2" height="2" fill="#bdbdbd" opacity=".85"/><rect x="1" y="124" width="1" height="1" fill="#e4e4e4"/><rect x="1" y="129.4" width="2" height="2" fill="#fff"/><rect x="0" y="128.4" width="2" height="2" fill="#bdbdbd" opacity=".85"/><rect x="1" y="129.4" width="1" height="1" fill="#e4e4e4"/><rect x="1" y="134.8" width="2" height="2" fill="#fff"/><rect x="0" y="133.8" width="2" height="2" fill="#bdbdbd" opacity=".85"/><rect x="1" y="134.8" width="1" height="1" fill="#e4e4e4"/><rect x="1" y="140.1" width="2" height="2" fill="#fff"/><rect x="0" y="139.1" width="2" height="2" fill="#bdbdbd" opacity=".85"/><rect x="1" y="140.1" width="1" height="1" fill="#e4e4e4"/><rect x="1" y="145.4" width="2" height="2" fill="#fff"/><rect x="0" y="144.4" width="2" height="2" fill="#bdbdbd" opacity=".85"/><rect x="1" y="145.4" width="1" height="1" fill="#e4e4e4"/><rect x="1" y="150.8" width="2" height="2" fill="#fff"/><rect x="0" y="149.8" width="2" height="2" fill="#bdbdbd" opacity=".85"/><rect x="1" y="150.8" width="1" height="1" fill="#e4e4e4"/><rect x="1" y="156.1" width="2" height="2" fill="#fff"/><rect x="0" y="155.1" width="2" height="2" fill="#bdbdbd" opacity=".85"/><rect x="1" y="156.1" width="1" height="1" fill="#e4e4e4"/><rect x="1" y="161.5" width="2" height="2" fill="#fff"/><rect x="0" y="160.5" width="2" height="2" fill="#bdbdbd" opacity=".85"/><rect x="1" y="161.5" width="1" height="1" fill="#e4e4e4"/><rect x="1" y="166.8" width="2" height="2" fill="#fff"/><rect x="0" y="165.8" width="2" height="2" fill="#bdbdbd" opacity=".85"/><rect x="1" y="166.8" width="1" height="1" fill="#e4e4e4"/><rect x="1" y="172.2" width="2" height="2" fill="#fff"/><rect x="0" y="171.2" width="2" height="2" fill="#bdbdbd" opacity=".85"/><rect x="1" y="172.2" width="1" height="1" fill="#e4e4e4"/><rect x="1" y="177.5" width="2" height="2" fill="#fff"/><rect x="0" y="176.5" width="2" height="2" fill="#bdbdbd" opacity=".85"/><rect x="1" y="177.5" width="1" height="1" fill="#e4e4e4"/></svg><div class="a" style="left:56px;top:627px;width:100px;height:24px;box-sizing:border-box;border:1px solid #a9a9a9;border-top:none;border-radius:0 0 3px 3px;background:#f0f0f0"></div><div class="a" style="left:156px;top:628px;width:112px;height:19.500px;box-sizing:border-box;border:1px solid #a9a9a9;border-top:1px solid #c8c8c8;border-radius:0 0 3px 3px;background:linear-gradient(#f6f6f6,#e2e2e2)"></div><div class="t tah" id="tab1" style="left:73.500px;top:633.800px;font-size:12.200px">Layers Pa...</div><div class="t tah" id="tab2" style="left:172.500px;top:632.500px;font-size:12.200px">Browser Panel</div>
<div class="a" style="left:275px;top:103px;width:647px;height:548px;background:#fff;border-left:1px solid #a6a6a6;border-top:1px solid #b0b0b0;border-bottom:1px solid #b4b4b4;box-sizing:border-box"></div>
<div class="a" style="left:276px;top:104px;width:1px;height:546px;background:#dadada"></div><div class="a" style="left:276px;top:104px;width:645px;height:1px;background:#cdcdcd"></div>
<div class="a" style="left:921px;top:103px;width:1px;height:548px;background:#e4e4e4"></div>
<svg style="position:absolute;left:301px;top:225px;overflow:hidden" width="612" height="307" viewBox="0 0 612 307">
<defs><clipPath id="land"><path d="M28.9,59.8L23.8,61.2L18.7,62.6L13.6,63.6L6.8,64.8L0.8,65.3L0.8,66.0L6.8,65.6L13.6,64.4L18.7,63.4L23.8,62.0L28.9,60.7ZM598.4,62.9L603.5,63.9L611.1,65.3L611.1,66.0L603.5,64.6L598.4,63.6ZM43.4,55.8L47.1,54.1L47.6,55.6L44.2,56.4ZM221.8,288.1L228.7,287.3L230.3,289.8L223.5,290.7ZM20.4,41.5L30.6,40.0L27.2,36.6L22.9,36.9L40.0,31.8L51.0,33.1L66.3,34.5L76.5,35.2L88.4,34.0L93.5,34.9L102.0,34.9L110.5,37.4L119.0,37.7L127.5,37.4L136.0,37.4L144.5,31.4L149.6,34.9L153.0,36.6L159.8,38.2L166.6,34.9L167.5,39.1L159.8,40.8L156.4,44.2L147.9,47.6L145.3,51.0L147.9,53.5L148.8,56.1L156.4,57.0L161.5,59.0L166.1,59.3L166.6,62.9L169.2,65.8L171.7,65.5L171.7,61.2L175.1,57.8L173.4,53.5L173.4,50.1L173.4,47.1L180.2,47.1L187.0,49.3L187.9,52.7L190.4,53.9L195.5,50.5L200.6,55.2L204.0,58.7L209.1,62.0L211.3,64.6L209.1,65.6L204.0,67.7L193.8,67.7L188.7,70.5L185.3,73.4L192.1,69.7L196.4,69.7L196.4,72.2L195.5,74.8L202.3,74.8L204.0,74.8L202.3,76.2L197.2,77.5L193.8,79.1L193.8,77.3L192.1,76.5L187.0,78.7L185.8,80.8L187.0,82.1L183.6,83.0L180.2,84.0L180.2,85.8L177.7,87.5L176.8,90.1L177.3,92.6L174.2,94.9L171.7,96.4L168.3,98.6L167.8,101.1L169.2,104.9L170.0,108.0L169.3,110.2L167.5,109.7L165.4,105.9L165.2,103.4L163.2,102.0L160.7,102.5L157.2,101.5L154.7,101.7L154.2,103.4L151.3,103.2L146.5,102.5L144.5,103.4L141.1,105.7L140.6,108.8L139.7,114.8L140.6,118.2L142.8,120.7L145.3,122.1L149.6,121.4L151.8,119.8L152.5,117.3L158.1,116.4L157.2,119.8L156.4,122.4L155.0,125.8L159.8,126.1L163.2,126.6L164.4,127.7L163.7,131.8L163.9,134.3L165.8,136.8L168.3,138.0L170.8,136.8L174.2,138.2L173.4,140.2L170.8,138.0L169.2,140.6L166.6,139.1L164.0,138.6L161.5,136.0L160.1,134.3L157.2,130.9L153.8,130.0L150.4,129.2L146.2,125.8L142.8,126.3L138.6,125.3L133.4,123.2L129.2,121.0L126.6,118.5L127.0,115.6L124.1,112.2L120.2,108.8L118.2,106.2L115.1,103.7L113.6,100.3L111.0,99.1L111.3,102.0L113.9,105.4L116.4,108.8L118.5,111.9L119.8,113.9L118.5,113.4L115.6,110.5L112.2,107.1L110.5,105.4L109.3,102.0L107.1,97.7L104.5,95.2L101.1,94.4L98.9,91.0L97.7,88.7L95.5,85.8L94.7,84.2L94.9,81.6L95.2,77.3L95.2,74.5L94.0,70.9L96.9,70.5L96.9,69.4L93.5,68.0L89.2,65.5L87.5,62.9L85.0,60.4L82.5,57.8L78.2,54.4L74.0,53.5L68.9,51.3L62.9,51.0L57.8,49.6L53.5,51.0L48.4,52.2L48.4,49.3L45.1,51.9L43.4,54.4L39.1,56.4L34.0,58.7L28.9,59.8L32.3,57.8L37.4,54.7L38.2,53.0L34.0,53.0L30.6,51.9L26.4,50.1L24.7,47.6L27.2,45.9L32.3,45.1L32.3,43.4L28.0,43.4L23.8,43.0ZM205.2,71.9L208.2,67.2L211.1,65.5L211.7,68.0L215.0,69.7L216.2,72.2L215.0,73.6L211.7,73.1ZM87.9,66.6L93.5,68.0L96.4,70.7L93.5,70.2L88.7,68.0ZM201.4,40.0L197.2,45.1L194.6,47.6L190.4,46.8L185.3,45.9L180.2,43.4L173.4,43.4L175.1,40.8L181.9,38.2L178.5,36.6L171.7,34.0L163.2,34.0L154.7,33.1L153.0,29.8L161.5,28.0L170.0,27.7L176.8,29.4L185.3,32.3L190.4,34.0L192.9,37.4L198.9,38.6ZM107.1,34.9L113.9,36.4L127.5,35.7L132.6,34.3L127.5,29.8L119.0,28.9L106.2,29.8L103.7,31.4ZM93.5,30.6L100.3,31.8L108.8,28.9L105.4,26.7L95.2,26.7ZM153.0,22.9L173.4,22.9L178.5,19.5L190.4,17.0L200.6,13.6L187.0,11.9L161.5,12.8L149.6,15.3L158.1,18.7ZM142.8,24.7L149.6,26.2L170.0,26.0L170.0,24.5L154.7,23.1ZM107.1,25.2L119.0,26.4L125.8,25.5L125.8,23.3L115.6,22.9L107.1,23.8ZM132.6,30.6L142.8,31.1L151.3,28.9L146.2,26.9L136.0,27.5ZM142.8,20.4L156.4,19.9L158.1,16.5L147.9,15.3L141.1,17.9ZM158.1,44.2L164.9,46.8L169.2,45.1L164.9,42.0L159.8,41.6ZM181.9,19.5L190.4,23.8L204.0,23.8L212.5,30.6L214.2,34.0L219.3,34.9L215.0,39.1L217.6,44.2L222.7,48.4L229.5,51.0L232.9,51.0L235.5,45.9L239.7,41.6L251.6,37.4L261.8,36.6L268.6,33.1L265.2,29.8L272.0,26.4L273.7,22.1L275.4,17.0L285.6,14.4L268.6,13.1L251.6,11.0L229.5,12.2L207.4,13.1L195.5,15.3L190.4,17.9ZM265.2,41.6L268.6,40.1L275.4,40.5L280.5,40.3L283.1,42.5L280.5,43.7L274.6,45.2L267.8,44.5L268.6,42.8ZM161.5,115.9L165.8,113.7L170.0,113.9L175.1,116.4L179.9,118.7L174.2,119.2L173.4,117.8L170.0,116.1L166.6,114.9L163.2,115.9ZM179.3,121.5L182.8,119.2L187.0,119.3L189.7,121.4L187.0,121.9L184.4,122.9ZM172.9,121.7L176.3,122.1L175.1,122.7ZM191.8,121.5L194.5,121.7L193.8,122.6L191.8,122.4ZM174.2,138.2L177.7,134.8L181.9,133.4L184.4,131.9L184.1,134.3L187.0,133.4L190.4,135.2L195.5,135.7L200.6,134.8L202.3,136.8L204.0,138.6L208.2,142.3L214.2,143.1L218.1,145.3L221.0,149.9L221.0,153.0L224.4,154.2L227.8,155.0L230.7,157.2L235.5,157.9L239.7,159.0L242.8,161.2L246.2,162.3L246.8,165.8L246.0,169.2L243.1,172.6L240.5,175.1L239.7,179.3L239.4,183.3L238.0,187.0L236.3,190.4L232.9,192.1L229.5,193.5L226.1,195.0L223.5,197.2L223.2,201.1L220.5,204.8L217.3,207.7L215.0,210.8L212.5,212.3L209.1,211.7L206.7,210.8L209.1,214.7L208.1,217.6L204.0,219.1L200.6,219.3L200.1,222.4L195.5,222.7L197.2,225.3L195.0,228.7L191.2,231.2L193.8,234.3L191.2,237.2L188.7,239.7L189.7,242.1L189.4,244.0L195.2,246.0L192.1,247.0L187.0,246.5L183.6,244.8L180.2,242.2L178.0,238.0L177.7,232.9L179.3,229.5L181.9,224.4L180.7,220.2L181.1,215.9L182.8,212.5L184.4,208.2L184.4,204.0L185.3,199.8L186.1,196.4L186.5,192.1L186.7,187.9L186.3,184.1L183.6,181.9L179.3,179.7L176.3,176.5L174.8,173.4L172.6,169.2L170.3,164.9L168.0,162.9L167.8,160.3L169.7,158.6L168.6,156.9L168.6,154.7L170.0,152.2L171.7,150.4L173.4,148.8L174.6,146.2L174.2,142.8L174.4,141.1L173.4,140.2ZM202.3,240.5L207.4,240.4L206.6,241.9L203.2,241.7ZM296.6,91.8L294.9,90.1L290.7,90.1L289.8,87.2L291.0,83.3L290.4,79.9L292.4,78.7L297.5,79.1L302.6,79.2L303.8,77.3L304.0,74.8L301.8,72.6L298.0,71.4L298.3,70.4L303.1,70.4L303.3,68.7L306.3,68.9L308.7,67.2L310.2,66.3L311.9,65.6L313.3,64.3L314.5,62.6L317.9,62.0L320.4,61.5L320.8,59.5L319.9,56.4L322.2,55.8L324.0,54.9L323.5,57.3L323.0,59.0L323.0,60.4L324.7,61.2L327.2,60.7L330.1,61.4L334.0,60.4L337.5,60.0L339.7,60.5L341.7,59.0L341.7,56.4L344.2,55.1L346.8,55.8L347.5,53.9L345.9,52.4L350.2,51.9L353.6,51.9L357.0,51.0L354.5,50.1L350.2,50.3L345.1,51.2L342.6,50.0L342.2,47.6L342.6,45.6L347.6,42.8L349.0,41.6L345.9,41.1L343.4,41.8L342.2,43.4L338.3,45.6L335.8,47.6L335.2,49.6L337.5,51.0L336.6,52.7L334.2,55.2L333.2,57.5L330.3,58.7L328.1,58.8L327.8,57.0L326.1,54.7L324.7,52.7L323.9,51.9L321.3,53.2L318.2,54.4L315.7,53.0L314.5,50.1L314.5,47.6L317.1,46.2L320.4,45.1L323.9,43.4L326.4,41.6L328.1,39.1L330.6,37.1L334.0,35.7L338.3,34.0L343.4,33.1L348.5,32.3L353.6,32.3L358.7,33.5L357.0,34.5L362.1,35.2L367.2,35.7L374.9,37.7L375.7,39.4L371.4,40.6L364.6,39.8L362.1,39.6L364.6,41.6L365.2,43.5L369.8,44.2L370.6,42.8L374.9,43.4L374.0,41.3L377.4,40.1L380.8,40.6L381.1,37.4L384.2,37.4L385.1,39.4L387.6,38.1L396.1,36.6L399.5,36.6L408.0,36.2L408.8,34.3L414.8,35.4L419.9,36.0L422.4,37.1L423.3,35.7L419.9,34.5L419.9,32.3L423.3,29.2L429.2,29.4L429.8,32.3L428.4,35.7L431.0,37.4L428.4,40.3L431.8,39.4L432.7,36.6L436.1,32.0L438.6,30.6L442.8,30.6L444.6,28.0L452.2,27.2L453.9,25.5L462.4,24.1L472.6,23.5L482.8,20.9L487.9,22.9L496.4,22.9L498.9,24.7L493.0,27.2L497.2,27.5L506.6,28.6L515.1,28.9L521.0,29.8L525.3,31.4L528.7,32.6L532.1,31.4L538.9,31.8L544.0,29.8L554.2,30.1L561.0,31.4L564.4,32.5L574.6,32.5L578.9,34.7L584.8,34.5L591.6,34.0L595.9,35.7L600.1,34.2L608.6,35.2L612.0,35.7L612.0,42.5L609.5,43.4L606.9,42.8L609.5,45.9L611.1,47.1L606.9,46.8L601.8,47.9L595.9,51.0L589.9,50.5L584.8,51.2L583.1,53.5L581.4,54.7L583.4,57.5L581.4,59.5L578.0,62.6L575.1,64.6L572.4,66.3L571.2,62.9L570.4,58.7L571.2,56.1L574.6,54.1L579.7,50.5L584.0,48.4L584.8,46.8L578.0,48.1L572.9,48.3L569.5,51.9L564.4,52.7L559.3,51.9L553.4,52.2L548.2,52.4L544.0,54.9L539.8,58.1L535.8,60.0L539.8,61.2L544.0,61.2L546.2,62.9L545.2,66.3L544.7,69.7L542.3,72.6L538.9,76.0L536.0,78.5L532.1,80.2L529.6,79.9L528.2,81.1L526.5,82.8L526.1,84.5L522.8,85.8L524.1,87.5L526.0,90.1L525.8,92.5L524.4,93.5L521.0,94.5L520.9,91.8L521.6,89.6L519.4,88.7L518.5,87.0L518.8,85.7L517.3,85.0L513.4,86.7L512.2,86.7L513.4,84.2L511.7,83.5L509.2,85.3L506.1,86.7L507.1,88.4L508.6,89.8L511.7,88.9L514.2,89.8L511.4,91.3L508.8,93.5L510.5,95.7L511.7,97.7L513.2,99.5L513.1,101.1L510.9,101.5L513.1,102.9L512.7,104.9L510.9,107.1L509.3,109.7L507.5,111.2L504.9,113.1L502.3,114.4L499.5,115.1L496.4,116.1L493.9,117.0L493.3,118.5L492.5,116.4L490.1,116.3L487.9,117.3L486.2,119.8L485.9,121.5L487.9,124.1L490.5,126.1L491.8,130.0L491.6,132.9L489.6,134.6L487.6,135.5L487.0,136.8L484.5,138.2L484.5,136.0L482.8,135.2L481.1,134.0L480.2,132.3L477.7,131.4L476.9,130.0L476.0,130.4L475.7,133.4L474.6,136.0L475.7,137.4L476.9,140.2L478.9,141.6L480.8,143.7L481.9,146.2L481.9,148.8L483.1,150.6L481.8,150.4L478.2,148.2L476.9,145.9L476.5,142.8L475.2,140.8L473.1,139.4L473.4,136.0L473.8,132.6L472.6,129.2L472.1,125.8L470.9,124.1L468.3,126.1L466.3,125.8L466.6,122.4L464.9,119.3L462.9,117.6L461.9,114.8L459.9,115.1L457.3,115.9L453.9,116.8L453.6,118.5L451.0,119.7L448.8,121.5L445.9,124.4L442.5,126.5L442.3,130.0L441.8,133.4L441.1,135.5L440.3,137.2L438.9,137.9L437.8,139.2L436.1,137.2L434.9,133.8L433.2,130.9L432.1,127.5L430.6,123.2L429.8,120.4L429.8,117.3L428.9,115.9L426.7,117.6L423.6,115.3L425.5,114.1L422.4,113.1L420.4,111.2L419.1,109.8L414.8,110.0L410.5,110.2L406.3,109.8L403.4,109.1L402.1,107.1L399.0,107.8L396.1,107.1L393.6,105.6L391.8,102.9L389.3,101.3L387.6,102.0L388.1,104.0L390.1,106.2L391.3,108.0L392.4,110.5L393.7,109.1L393.7,111.3L396.1,112.0L398.7,111.7L401.2,108.8L401.9,110.8L403.8,112.5L405.8,113.1L407.7,114.9L405.8,118.2L404.1,120.7L402.1,122.4L399.5,124.1L394.9,125.8L389.3,128.7L385.1,130.2L382.5,131.2L379.9,131.4L379.1,129.2L378.8,126.6L377.9,123.6L376.2,121.2L374.0,118.5L372.6,116.4L371.4,113.1L369.4,110.5L368.1,108.0L365.8,105.4L365.3,102.9L364.3,105.4L364.1,105.7L362.4,104.2L361.4,102.0L360.9,99.8L364.1,99.8L365.3,97.7L366.3,95.4L367.2,93.5L367.2,90.4L364.6,90.6L361.2,91.6L357.9,91.0L355.3,90.8L352.7,90.1L351.0,87.5L351.6,85.8L350.5,84.7L355.3,84.2L355.3,83.0L359.6,82.8L362.9,81.6L365.5,81.6L368.1,82.8L371.4,83.3L374.9,83.3L376.6,82.3L375.7,79.9L372.3,78.2L369.8,76.8L371.4,74.5L369.8,73.1L365.5,74.3L368.1,75.8L366.3,77.0L363.1,77.3L361.6,75.3L358.7,73.8L356.7,75.7L354.8,77.3L353.3,80.2L353.8,82.3L350.2,83.6L346.8,83.6L345.9,84.7L344.8,84.5L345.1,86.2L346.8,88.1L345.4,88.7L345.1,91.0L343.7,90.6L342.2,89.2L341.7,87.2L340.0,85.5L339.0,83.6L339.0,81.8L337.5,80.8L334.9,79.6L332.3,78.2L331.2,76.5L329.3,75.7L326.9,76.0L326.9,77.7L329.1,79.1L330.1,81.1L333.2,81.9L333.5,82.6L337.3,84.7L337.1,85.3L334.9,84.2L334.2,85.5L335.1,86.7L334.0,87.9L332.7,88.6L332.9,87.2L333.2,86.0L332.3,84.8L330.6,83.8L328.1,82.8L326.7,81.9L323.9,80.1L323.0,78.2L321.0,77.5L318.8,78.5L316.5,79.7L314.2,79.2L311.6,79.6L311.4,81.8L309.4,82.8L307.4,83.3L305.5,85.8L306.3,87.0L304.8,88.9L302.6,90.4L298.3,90.6ZM0.0,35.7L5.1,36.9L11.9,39.1L17.0,40.5L15.3,41.6L12.8,43.4L7.7,42.8L4.2,41.6L1.7,42.0L0.0,42.5ZM296.6,68.0L300.1,67.5L304.3,66.8L308.2,66.0L308.9,63.4L306.5,62.9L305.7,61.2L303.4,59.5L302.6,57.8L301.2,57.5L302.6,55.2L300.1,54.9L300.9,53.4L297.5,53.4L295.8,55.2L296.6,57.8L297.8,59.5L300.6,59.8L300.9,62.0L298.3,62.4L298.9,64.1L297.2,64.9L300.1,65.6L298.3,66.3ZM289.0,64.9L295.3,64.3L295.8,62.0L296.3,60.4L294.1,59.0L291.6,60.4L289.0,60.9L289.8,62.9ZM393.6,31.4L396.1,32.6L402.9,32.8L401.2,29.8L402.9,27.2L409.7,24.7L421.6,22.4L418.2,22.1L406.3,23.8L399.5,26.4L396.1,28.9ZM324.7,18.7L331.5,22.1L336.6,21.2L343.4,19.9L350.2,17.0L340.0,16.1ZM467.5,18.7L476.0,19.9L484.5,18.7L476.0,15.3L467.5,16.1ZM538.9,25.5L547.4,27.5L561.0,25.5L552.5,23.8ZM609.5,32.0L612.0,32.5L612.0,31.4L610.3,31.3ZM385.9,16.5L399.5,17.0L411.4,15.6L402.9,14.3L387.6,15.3ZM528.5,95.2L531.2,94.7L535.5,94.2L536.7,96.0L538.9,94.2L542.0,94.0L544.0,93.2L545.4,91.8L545.7,88.1L547.4,85.8L546.6,82.8L544.5,83.3L544.0,85.3L543.1,87.9L540.6,90.1L538.9,89.6L538.4,90.6L537.2,92.3L532.1,92.6L528.7,94.4ZM527.0,96.0L529.9,95.9L529.6,99.5L527.9,100.0L526.7,97.4ZM530.9,96.4L534.3,94.9L534.6,95.7L532.1,97.2ZM544.0,82.5L545.7,80.8L549.4,81.6L553.4,79.4L551.3,78.2L547.4,75.7L546.6,79.1L544.5,79.9ZM547.4,74.8L550.0,73.4L549.1,69.7L551.6,69.7L549.6,65.5L549.4,62.4L548.6,60.7L547.4,62.4L547.4,68.0ZM510.3,113.9L511.7,110.2L513.2,110.5L512.4,113.9L511.4,115.6ZM490.8,120.4L493.0,118.8L494.7,119.5L493.5,121.5L491.3,121.9ZM441.7,139.4L442.3,136.3L444.0,138.6L445.1,140.6L443.7,142.5L442.2,142.6ZM510.5,125.8L511.0,121.5L513.7,121.7L513.4,125.0L512.9,127.8L516.8,130.0L516.6,131.2L514.2,129.5L512.2,129.7L511.2,128.3L510.0,127.5ZM513.4,141.1L516.0,138.6L519.4,136.3L520.9,139.4L520.2,142.0L519.4,143.1L516.8,142.0ZM513.4,132.9L515.4,133.4L518.5,131.8L519.4,134.3L517.6,136.0L515.6,136.8L514.2,136.0L513.4,135.2ZM505.4,138.6L509.2,133.8L508.6,135.7L506.3,138.6ZM468.0,143.7L471.8,144.2L476.0,147.9L481.1,151.6L483.6,154.7L486.2,158.1L485.9,162.9L483.6,162.7L479.9,159.8L476.9,155.5L474.0,150.4L470.9,147.4ZM485.0,164.4L487.4,163.2L490.6,164.4L494.4,163.9L497.6,164.7L500.6,166.3L500.5,167.8L494.7,167.1L489.6,166.3L486.9,165.6ZM491.3,150.4L492.3,149.6L495.2,148.4L498.1,147.6L500.6,145.2L503.2,142.5L504.9,141.1L506.1,142.3L508.6,144.0L506.6,145.7L505.9,147.9L506.6,150.4L508.3,151.3L505.7,153.0L504.0,155.5L503.2,159.0L500.8,159.8L496.4,158.8L493.3,158.1L493.0,155.5L491.3,153.5ZM509.7,152.2L511.4,150.8L515.1,151.3L518.5,150.3L517.6,152.2L513.4,152.2L510.9,153.0L510.0,154.4L512.6,154.5L515.6,154.4L514.8,155.5L512.6,156.2L513.9,158.6L515.1,160.1L514.4,162.2L512.7,161.0L511.7,159.0L510.7,158.1L510.7,162.3L509.2,162.3L509.2,159.0L508.0,157.8L509.7,153.3ZM501.5,166.9L504.9,167.1L508.3,167.3L511.7,167.3L515.1,166.9L514.8,168.0L510.0,168.3L504.9,168.3L501.8,168.0ZM516.0,170.5L518.5,168.6L522.4,167.3L521.0,168.6L517.6,170.2ZM522.8,151.3L523.6,149.6L524.8,151.3L523.6,154.4L522.9,153.0ZM523.6,158.1L528.4,158.1L527.9,159.3L523.6,159.0ZM528.7,154.4L531.2,153.7L533.8,154.4L534.1,157.2L535.5,158.6L539.8,155.7L545.7,157.4L551.6,159.5L553.9,162.0L556.8,163.2L557.3,165.8L561.0,170.8L557.6,170.3L554.2,167.5L551.6,166.1L550.0,168.3L545.7,168.6L542.3,166.6L540.6,167.3L540.3,165.4L542.0,164.6L540.6,162.3L536.4,160.5L532.1,159.8L531.8,158.6L533.8,157.2L531.2,157.6L529.2,155.5ZM558.4,162.5L562.7,161.5L564.9,160.1L564.4,162.0L561.0,163.5ZM499.3,191.2L500.1,190.1L504.6,188.0L508.3,187.0L512.6,185.3L513.9,182.2L516.3,180.7L519.4,177.7L521.9,176.6L524.4,178.3L526.5,178.3L527.3,175.1L528.7,173.7L531.6,172.4L536.0,173.7L538.6,173.7L537.2,175.9L536.4,178.5L539.8,180.2L542.8,182.6L545.4,182.8L546.9,178.5L546.9,174.8L548.2,171.4L550.0,174.8L550.3,177.3L553.0,178.5L554.2,182.8L554.7,185.1L558.4,187.3L560.1,190.9L562.4,192.6L565.8,196.0L566.4,198.9L567.1,201.8L566.1,205.7L564.4,208.6L563.0,210.8L561.3,214.2L561.0,216.8L557.6,217.4L555.0,219.3L552.5,218.1L550.0,219.0L546.6,218.1L544.0,216.8L543.1,213.9L540.9,213.5L541.4,211.7L540.3,209.1L539.2,210.8L538.9,213.3L537.2,212.2L535.5,210.5L533.8,208.8L530.4,207.4L525.3,206.7L520.2,207.9L516.8,209.1L516.0,210.6L510.0,210.6L506.6,212.5L503.2,212.2L501.5,211.3L502.5,208.2L501.7,204.8L500.1,200.6L498.6,197.2ZM552.0,222.2L555.0,222.9L558.1,222.5L557.6,225.8L555.6,227.1L553.4,225.8ZM599.6,211.7L602.3,214.2L604.4,215.4L605.2,216.9L608.6,216.9L609.1,218.8L606.9,220.2L606.1,222.4L604.0,223.7L603.2,222.4L603.5,221.0L601.5,219.8L603.0,217.6L602.6,215.6L600.1,212.8ZM599.6,222.0L602.1,223.9L600.1,226.4L597.2,228.3L596.4,230.9L593.3,232.2L589.9,231.5L589.1,230.7L592.1,227.8L595.9,225.8L597.5,223.9ZM584.8,187.3L589.1,190.1L589.9,191.1L586.5,189.6ZM296.0,92.1L302.6,93.2L307.7,91.0L311.1,90.3L317.9,90.1L323.0,89.6L324.7,90.3L323.3,92.6L324.4,94.4L323.2,95.2L324.7,96.4L328.1,97.1L332.0,98.1L335.8,100.5L339.2,101.3L340.3,98.6L343.4,97.1L348.5,99.1L352.7,100.0L356.2,100.5L358.7,99.5L360.9,99.8L361.4,102.0L361.4,102.3L362.9,105.7L364.6,109.7L366.5,112.5L368.9,115.9L369.4,119.0L369.8,121.5L372.0,125.0L373.5,127.0L376.6,129.5L379.4,131.8L379.6,133.4L381.6,135.2L385.9,134.0L389.3,133.8L393.0,132.8L392.9,135.2L391.5,138.6L389.3,142.8L386.8,146.2L383.4,149.3L379.9,152.2L377.4,154.7L375.7,156.9L374.3,158.6L372.8,161.5L372.0,164.0L373.2,166.6L373.7,170.0L374.9,171.7L375.2,176.8L374.9,180.2L371.4,182.8L368.1,185.3L365.5,187.3L366.3,191.2L366.2,193.8L362.1,196.4L361.8,199.8L361.2,201.8L358.7,204.0L357.0,206.6L353.9,208.9L351.0,210.5L349.3,211.0L344.2,211.0L340.0,212.2L337.3,211.3L336.9,208.2L335.4,204.8L333.7,201.4L331.8,198.9L330.8,194.6L330.5,191.2L328.6,187.9L326.4,183.6L326.1,180.2L327.2,175.9L329.3,173.1L328.9,170.0L328.1,167.5L326.9,163.5L326.4,161.5L325.0,159.8L322.7,157.2L321.3,154.7L322.2,152.2L322.5,148.8L322.7,147.1L321.0,145.3L317.9,145.5L315.7,145.3L313.6,142.5L310.2,142.3L307.7,143.0L304.3,144.2L302.6,144.8L299.2,144.2L295.8,144.8L293.2,145.5L290.7,144.5L287.6,142.0L285.1,140.2L283.4,138.2L282.7,136.3L280.5,134.5L277.6,132.1L277.4,130.0L276.2,128.0L277.9,125.8L278.3,122.4L278.3,119.8L277.1,117.3L278.8,113.1L280.8,109.7L283.1,106.2L286.4,104.5L289.0,102.9L289.5,100.3L291.2,96.9L294.4,94.9ZM389.8,173.4L391.7,179.3L390.1,182.8L388.4,187.9L386.4,195.2L382.8,196.4L380.3,192.9L379.6,190.1L381.5,186.7L380.8,182.8L382.5,180.2L385.9,178.8L387.6,176.3ZM327.2,88.4L332.3,88.1L331.8,90.6L328.1,89.6ZM320.1,83.3L322.5,83.3L322.3,86.4L320.4,86.7ZM320.8,80.6L322.2,79.9L322.0,82.5L320.8,82.1ZM345.9,92.6L350.7,93.0L350.2,93.5L346.1,93.2ZM360.9,93.5L364.6,92.5L363.6,93.7L361.8,94.2ZM0.0,297.0L19.0,294.9L29.8,290.0L40.0,286.6L51.0,284.1L63.9,282.4L80.9,281.0L98.9,279.6L117.0,278.5L133.6,277.9L147.1,278.8L161.0,279.6L172.0,278.5L182.1,276.1L183.9,272.7L188.0,270.5L194.5,267.6L199.1,265.5L204.0,262.0L209.9,260.6L208.1,264.5L205.0,267.1L202.0,272.0L200.9,276.9L202.0,283.1L199.1,288.0L198.1,292.6L205.0,294.4L214.0,294.9L221.0,293.4L229.0,294.4L237.0,293.1L244.6,288.0L250.9,286.4L258.6,284.9L265.0,283.1L272.0,281.3L281.0,279.0L289.7,276.9L299.0,276.2L316.0,275.6L333.7,274.6L351.0,273.0L368.2,271.0L381.0,269.4L392.5,268.6L407.0,268.9L421.9,270.0L424.5,273.0L425.7,276.1L429.9,274.0L437.8,272.0L449.0,270.0L462.1,268.6L477.0,267.9L493.0,267.9L511.0,267.8L527.9,267.9L542.0,268.4L555.6,270.0L565.9,272.0L576.5,274.6L585.0,275.6L589.1,277.9L584.0,283.1L580.0,290.0L585.0,293.9L597.0,297.0L612.0,297.7L612.0,307.7L0.0,307.7Z"/></clipPath>
<filter id="b6" x="-20%" y="-20%" width="140%" height="140%"><feGaussianBlur stdDeviation="4.5"/></filter>
<filter id="b1" x="-20%" y="-20%" width="140%" height="140%"><feGaussianBlur stdDeviation="1"/></filter>
<filter id="b10" x="-20%" y="-20%" width="140%" height="140%"><feGaussianBlur stdDeviation="8"/></filter>
<filter id="nw" x="0" y="0" width="100%" height="100%"><feTurbulence type="fractalNoise" baseFrequency="0.6" numOctaves="2" seed="3"/><feColorMatrix type="matrix" values="0 0 0 0 1  0 0 0 0 1  0 0 0 0 1  1.6 0 0 0 -0.86"/></filter>
<filter id="nd" x="0" y="0" width="100%" height="100%"><feTurbulence type="fractalNoise" baseFrequency="0.6" numOctaves="2" seed="11"/><feColorMatrix type="matrix" values="0 0 0 0 .12  0 0 0 0 .25  0 0 0 0 .4  1.6 0 0 0 -0.84"/></filter>
<filter id="sp" x="0" y="0" width="100%" height="100%"><feTurbulence type="fractalNoise" baseFrequency="0.9" numOctaves="1" seed="5"/><feColorMatrix type="matrix" values="0 0 0 0 .35  0 0 0 0 .35  0 0 0 0 .3  4 0 0 0 -2.5"/></filter>
<filter id="spw" x="0" y="0" width="100%" height="100%"><feTurbulence type="fractalNoise" baseFrequency="0.9" numOctaves="1" seed="9"/><feColorMatrix type="matrix" values="0 0 0 0 1  0 0 0 0 1  0 0 0 0 1  4 0 0 0 -2.45"/></filter>
<clipPath id="mtn"><ellipse cx="98.6" cy="71.4" rx="11.9" ry="27.2" fill="#000" opacity="1" transform="rotate(-25 98.6 71.4)"/><ellipse cx="51.0" cy="47.6" rx="23.8" ry="6.8" fill="#000" opacity="1"/><ellipse cx="122.4" cy="88.4" rx="10.2" ry="17.0" fill="#000" opacity="1"/><ellipse cx="132.6" cy="115.6" rx="8.5" ry="11.9" fill="#000" opacity="1" transform="rotate(-30 132.6 115.6)"/><ellipse cx="187.0" cy="187.0" rx="6.0" ry="44.2" fill="#000" opacity="1" transform="rotate(-8 187.0 187.0)"/><ellipse cx="178.5" cy="149.6" rx="6.8" ry="13.6" fill="#000" opacity="1" transform="rotate(30 178.5 149.6)"/><ellipse cx="323.0" cy="74.8" rx="20.4" ry="5.1" fill="#000" opacity="1"/><ellipse cx="370.6" cy="86.7" rx="20.4" ry="6.0" fill="#000" opacity="1"/><ellipse cx="394.4" cy="96.9" rx="13.6" ry="10.2" fill="#000" opacity="1" transform="rotate(-30 394.4 96.9)"/><ellipse cx="425.0" cy="91.8" rx="17.0" ry="8.5" fill="#000" opacity="1"/><ellipse cx="455.6" cy="98.6" rx="23.8" ry="10.2" fill="#000" opacity="1"/><ellipse cx="476.0" cy="107.1" rx="10.2" ry="13.6" fill="#000" opacity="1"/><ellipse cx="467.5" cy="71.4" rx="25.5" ry="8.5" fill="#000" opacity="1"/><ellipse cx="501.5" cy="54.4" rx="34.0" ry="10.2" fill="#000" opacity="1"/><ellipse cx="561.0" cy="42.5" rx="51.0" ry="10.2" fill="#000" opacity="1"/><ellipse cx="326.4" cy="44.2" rx="8.5" ry="13.6" fill="#000" opacity="1" transform="rotate(-30 326.4 44.2)"/><ellipse cx="368.9" cy="139.4" rx="8.5" ry="13.6" fill="#000" opacity="1"/><ellipse cx="362.1" cy="166.6" rx="6.8" ry="17.0" fill="#000" opacity="1"/><ellipse cx="353.6" cy="200.6" rx="13.6" ry="8.5" fill="#000" opacity="1"/><ellipse cx="306.0" cy="98.6" rx="17.0" ry="5.1" fill="#000" opacity="1"/><ellipse cx="319.6" cy="115.6" rx="17.0" ry="6.8" fill="#000" opacity="1"/><ellipse cx="379.1" cy="122.4" rx="6.8" ry="13.6" fill="#000" opacity="1" transform="rotate(-25 379.1 122.4)"/><ellipse cx="540.6" cy="161.5" rx="17.0" ry="3.4" fill="#000" opacity="1" transform="rotate(15 540.6 161.5)"/><ellipse cx="555.9" cy="207.4" rx="5.1" ry="13.6" fill="#000" opacity="1" transform="rotate(-20 555.9 207.4)"/></clipPath>
<linearGradient id="arc" x1="0" y1="0" x2="0" y2="1"><stop offset="0" stop-color="#82b6da" stop-opacity=".55"/><stop offset=".55" stop-color="#7db2d7" stop-opacity=".32"/><stop offset="1" stop-color="#7db2d7" stop-opacity="0"/></linearGradient>
</defs>
<rect width="612" height="307" fill="#5f97c0"/>
<g filter="url(#b10)"><ellipse cx="306.0" cy="3.4" rx="323.0" ry="11.9" fill="#74abd1" opacity="0.6"/><ellipse cx="476.0" cy="22.1" rx="136.0" ry="8.5" fill="#78aed4" opacity="0.8"/><ellipse cx="34.0" cy="27.2" rx="42.5" ry="8.5" fill="#74abd1" opacity="0.8"/><ellipse cx="569.5" cy="115.6" rx="37.4" ry="37.4" fill="#4f87b4" opacity="0.75"/><ellipse cx="51.0" cy="98.6" rx="54.4" ry="23.8" fill="#568eb9" opacity="0.7"/><ellipse cx="68.0" cy="195.5" rx="68.0" ry="37.4" fill="#568eb9" opacity="0.3"/><ellipse cx="127.5" cy="229.5" rx="42.5" ry="17.0" fill="#6ba3cb" opacity="0.5"/><ellipse cx="255.0" cy="200.6" rx="23.8" ry="34.0" fill="#568eb9" opacity="0.7"/><ellipse cx="221.0" cy="102.0" rx="37.4" ry="20.4" fill="#4f87b4" opacity="0.65"/><ellipse cx="229.5" cy="54.4" rx="30.6" ry="13.6" fill="#74abd1" opacity="0.8"/><ellipse cx="289.0" cy="37.4" rx="23.8" ry="10.2" fill="#6ba3cb" opacity="0.8"/><ellipse cx="272.0" cy="144.5" rx="13.6" ry="10.2" fill="#568eb9" opacity="0.5"/><ellipse cx="467.5" cy="200.6" rx="23.8" ry="17.0" fill="#568eb9" opacity="0.7"/><ellipse cx="399.5" cy="200.6" rx="23.8" ry="17.0" fill="#6ba3cb" opacity="0.55"/><ellipse cx="425.0" cy="166.6" rx="13.6" ry="23.8" fill="#6ba3cb" opacity="0.4"/><ellipse cx="340.0" cy="224.4" rx="27.2" ry="10.2" fill="#6ba3cb" opacity="0.5"/><ellipse cx="306.0" cy="187.0" rx="13.6" ry="27.2" fill="#6ba3cb" opacity="0.35"/><ellipse cx="306.0" cy="251.6" rx="314.5" ry="10.2" fill="#6ba3cb" opacity="0.8"/><ellipse cx="501.5" cy="147.9" rx="30.6" ry="17.0" fill="#74abd1" opacity="0.9"/><ellipse cx="535.5" cy="171.7" rx="17.0" ry="6.8" fill="#74abd1" opacity="0.9"/><ellipse cx="516.8" cy="96.9" rx="8.5" ry="10.2" fill="#74abd1" opacity="0.8"/><ellipse cx="198.9" cy="231.2" rx="6.8" ry="11.9" fill="#6ba3cb" opacity="0.6"/><ellipse cx="231.2" cy="226.1" rx="20.4" ry="11.9" fill="#4f87b4" opacity="0.6"/><ellipse cx="161.5" cy="51.0" rx="13.6" ry="8.5" fill="#6ba3cb" opacity="0.9"/><ellipse cx="13.6" cy="51.0" rx="17.0" ry="8.5" fill="#74abd1" opacity="0.8"/><ellipse cx="311.1" cy="56.1" rx="13.6" ry="6.8" fill="#74abd1" opacity="0.8"/><ellipse cx="221.0" cy="73.1" rx="11.9" ry="6.8" fill="#6ba3cb" opacity="0.7"/><ellipse cx="153.0" cy="110.5" rx="11.9" ry="6.8" fill="#6ba3cb" opacity="0.8"/><ellipse cx="178.5" cy="127.5" rx="18.7" ry="6.8" fill="#6ba3cb" opacity="0.6"/><ellipse cx="176.8" cy="102.0" rx="6.8" ry="10.2" fill="#6ba3cb" opacity="0.5"/><ellipse cx="595.0" cy="229.5" rx="20.4" ry="13.6" fill="#6ba3cb" opacity="0.6"/><ellipse cx="336.6" cy="91.8" rx="27.2" ry="5.1" fill="#568eb9" opacity="0.4"/></g>
<rect width="612" height="70" fill="url(#arc)"/>
<rect width="612" height="307" filter="url(#nw)" opacity=".3"/><rect width="612" height="307" filter="url(#nd)" opacity=".7"/>
<rect width="612" height="1.5" fill="#3f7fb6" opacity=".8"/>
<g clip-path="url(#land)">
<rect width="612" height="307" fill="#b0cda3"/>
<g filter="url(#b6)"><ellipse cx="122.4" cy="35.7" rx="105.4" ry="13.6" fill="#dadcd0" opacity="1"/><ellipse cx="45.9" cy="40.8" rx="27.2" ry="10.2" fill="#dadcd0" opacity="0.95"/><ellipse cx="3.4" cy="40.8" rx="13.6" ry="8.5" fill="#dadcd0" opacity="1"/><ellipse cx="608.6" cy="40.8" rx="17.0" ry="8.5" fill="#dadcd0" opacity="1"/><ellipse cx="187.0" cy="56.1" rx="20.4" ry="10.2" fill="#dadcd0" opacity="0.8"/><ellipse cx="144.5" cy="22.1" rx="71.4" ry="13.6" fill="#e4e5de" opacity="1"/><ellipse cx="134.3" cy="81.6" rx="14.4" ry="22.1" fill="#e0dfb0" opacity="1"/><ellipse cx="122.4" cy="68.0" rx="13.6" ry="7.7" fill="#e0dfb0" opacity="0.85"/><ellipse cx="112.2" cy="90.1" rx="13.6" ry="15.3" fill="#f1e1cb" opacity="1"/><ellipse cx="129.2" cy="108.8" rx="10.2" ry="11.9" fill="#f1e1cb" opacity="0.95"/><ellipse cx="163.2" cy="91.8" rx="15.3" ry="13.6" fill="#90c097" opacity="0.4"/><ellipse cx="127.5" cy="57.8" rx="51.0" ry="9.3" fill="#a6c9b0" opacity="0.9"/><ellipse cx="178.5" cy="68.0" rx="17.0" ry="6.8" fill="#a6c9b0" opacity="0.7"/><ellipse cx="156.4" cy="125.8" rx="10.2" ry="6.8" fill="#90c097" opacity="0.5"/><ellipse cx="238.0" cy="27.2" rx="57.8" ry="28.9" fill="#e8ebf4" opacity="1"/><ellipse cx="238.0" cy="30.6" rx="37.4" ry="20.4" fill="#e8ebf4" opacity="1"/><ellipse cx="273.7" cy="42.5" rx="8.5" ry="4.2" fill="#dfe0d2" opacity="1"/><ellipse cx="183.6" cy="37.4" rx="15.3" ry="10.2" fill="#dadcd0" opacity="1"/><ellipse cx="161.5" cy="28.9" rx="23.8" ry="6.8" fill="#e0e2da" opacity="1"/><ellipse cx="170.0" cy="18.7" rx="15.3" ry="6.8" fill="#e6e8e6" opacity="1"/><ellipse cx="200.6" cy="159.8" rx="22.1" ry="15.3" fill="#90c097" opacity="0.85"/><ellipse cx="187.9" cy="193.8" rx="6.0" ry="20.4" fill="#f1e1cb" opacity="1"/><ellipse cx="190.4" cy="227.8" rx="8.5" ry="17.0" fill="#e6e1c4" opacity="1"/><ellipse cx="236.3" cy="168.3" rx="10.2" ry="13.6" fill="#e0dfb0" opacity="0.85"/><ellipse cx="209.1" cy="187.0" rx="15.3" ry="15.3" fill="#cfdaa9" opacity="0.7"/><ellipse cx="192.1" cy="141.1" rx="10.2" ry="5.1" fill="#e0dfb0" opacity="0.5"/><ellipse cx="316.2" cy="110.5" rx="54.4" ry="19.5" fill="#f1e1cb" opacity="1"/><ellipse cx="353.6" cy="110.5" rx="20.4" ry="17.0" fill="#f1e1cb" opacity="1"/><ellipse cx="314.5" cy="130.9" rx="47.6" ry="5.4" fill="#e0dfb0" opacity="0.85"/><ellipse cx="341.7" cy="153.0" rx="18.7" ry="10.2" fill="#90c097" opacity="0.8"/><ellipse cx="290.7" cy="139.4" rx="10.2" ry="6.8" fill="#90c097" opacity="0.4"/><ellipse cx="384.2" cy="141.1" rx="10.2" ry="10.2" fill="#f1e1cb" opacity="1"/><ellipse cx="367.2" cy="158.1" rx="8.5" ry="17.0" fill="#e0dfb0" opacity="0.85"/><ellipse cx="348.5" cy="185.3" rx="22.1" ry="17.0" fill="#e0dfb0" opacity="0.95"/><ellipse cx="357.0" cy="200.6" rx="13.6" ry="8.5" fill="#e0dfb0" opacity="0.8"/><ellipse cx="338.3" cy="195.5" rx="11.9" ry="11.9" fill="#f1e1cb" opacity="0.9"/><ellipse cx="384.2" cy="187.0" rx="5.1" ry="11.9" fill="#cfdaa9" opacity="0.6"/><ellipse cx="299.2" cy="85.0" rx="8.5" ry="6.0" fill="#e0dfb0" opacity="0.8"/><ellipse cx="363.8" cy="86.7" rx="13.6" ry="4.2" fill="#f1e1cb" opacity="0.8"/><ellipse cx="328.1" cy="42.5" rx="6.8" ry="15.3" fill="#d9decf" opacity="0.9" transform="rotate(-35 328.1 42.5)"/><ellipse cx="365.5" cy="37.4" rx="10.2" ry="3.4" fill="#d5dbca" opacity="0.8"/><ellipse cx="375.7" cy="95.2" rx="10.2" ry="6.8" fill="#f1e1cb" opacity="0.95"/><ellipse cx="384.2" cy="112.2" rx="18.7" ry="17.0" fill="#f1e1cb" opacity="1"/><ellipse cx="401.2" cy="98.6" rx="17.0" ry="10.2" fill="#f1e1cb" opacity="1"/><ellipse cx="411.4" cy="81.6" rx="23.8" ry="10.2" fill="#f1e1cb" opacity="1"/><ellipse cx="416.5" cy="68.0" rx="51.0" ry="6.8" fill="#e0dfb0" opacity="0.8"/><ellipse cx="365.5" cy="71.4" rx="23.8" ry="5.1" fill="#cfdaa9" opacity="0.7"/><ellipse cx="423.3" cy="105.4" rx="8.5" ry="8.5" fill="#f1e1cb" opacity="0.9"/><ellipse cx="455.6" cy="96.0" rx="23.8" ry="9.3" fill="#dfe2e5" opacity="1"/><ellipse cx="447.1" cy="85.8" rx="15.3" ry="4.2" fill="#f1e1cb" opacity="1"/><ellipse cx="479.4" cy="79.1" rx="25.5" ry="7.7" fill="#f1e1cb" opacity="1"/><ellipse cx="438.6" cy="119.0" rx="11.9" ry="15.3" fill="#cfdaa9" opacity="0.8"/><ellipse cx="501.5" cy="91.8" rx="13.6" ry="10.2" fill="#cfdaa9" opacity="0.5"/><ellipse cx="481.1" cy="122.4" rx="13.6" ry="17.0" fill="#90c097" opacity="0.4"/><ellipse cx="467.5" cy="49.3" rx="81.6" ry="11.0" fill="#a6c9b0" opacity="0.95"/><ellipse cx="377.4" cy="49.3" rx="30.6" ry="7.7" fill="#a6c9b0" opacity="0.8"/><ellipse cx="527.0" cy="64.6" rx="17.0" ry="8.5" fill="#a6c9b0" opacity="0.6"/><ellipse cx="484.5" cy="30.6" rx="136.0" ry="9.3" fill="#dadcd0" opacity="1"/><ellipse cx="561.0" cy="40.8" rx="54.4" ry="11.9" fill="#d6dacd" opacity="0.9"/><ellipse cx="408.0" cy="22.1" rx="51.0" ry="8.5" fill="#e9e9e6" opacity="1"/><ellipse cx="340.0" cy="18.7" rx="20.4" ry="5.1" fill="#e8ebf4" opacity="1"/><ellipse cx="476.0" cy="18.7" rx="20.4" ry="4.2" fill="#e8ebf4" opacity="1"/><ellipse cx="528.7" cy="195.5" rx="28.9" ry="16.1" fill="#e6d3b3" opacity="1"/><ellipse cx="511.7" cy="195.5" rx="11.9" ry="11.9" fill="#e9ccb2" opacity="0.9"/><ellipse cx="532.1" cy="178.5" rx="20.4" ry="5.1" fill="#e0dfb0" opacity="0.7"/><ellipse cx="598.4" cy="226.1" rx="8.5" ry="8.5" fill="#cfdaa9" opacity="0.5"/><rect x="-20" y="255.0" width="652" height="80" fill="#e8ebf4"/><ellipse cx="197.2" cy="268.6" rx="6.8" ry="10.2" fill="#e8ebf4" opacity="1"/></g>
<path d="M176.8,142.8L173.4,154.7L173.4,163.2L178.5,173.4L186.1,180.2L190.4,187.0L189.6,198.9L187.0,209.1L185.3,221.0L182.8,232.9L182.8,239.7" fill="none" stroke="#e6e4de" stroke-width="2.4" opacity=".65" filter="url(#b1)"/>
<g clip-path="url(#mtn)"><rect width="612" height="307" filter="url(#sp)" opacity=".6"/><rect width="612" height="307" filter="url(#spw)" opacity=".8"/></g>
</g>
<path d="M385.9,76.5L390.1,73.6L395.2,73.4L396.1,76.0L393.2,77.3L391.8,79.9L395.2,81.6L396.1,85.0L397.8,87.5L396.9,90.1L392.7,90.6L390.1,89.2L389.3,86.7L390.5,84.2L387.6,81.6L385.9,79.1ZM405.4,75.1L409.7,74.0L410.5,76.5L408.0,78.7L405.4,78.2ZM482.8,65.3L486.2,63.8L490.5,61.2L493.0,58.3L491.8,58.3L488.8,62.0L485.3,64.1Z" fill="#689fc8"/>
</svg>
<div class="t tah" id="sb1" style="left:46px;top:662.300px;font-size:12.200px">Coordinate</div><div class="a" style="left:111px;top:657px;width:215px;height:22px;box-sizing:border-box;border:1px solid #b4b4b4;border-radius:2px;background:#fff"></div><div class="t tah" id="sb2" style="left:182px;top:663.300px;font-size:12.200px;letter-spacing:0.300px">-193.8,160.5</div><div class="a" style="left:327px;top:654px;width:20px;height:29px;box-sizing:border-box;border:1px solid #8e8e8e;border-radius:3px;background:linear-gradient(#f8f8f8,#e0e0e0)"></div><svg style="left:0px;top:0px" width="360" height="686" viewBox="0 0 360 686" ><g transform="rotate(-38 336 668)"><ellipse cx="336" cy="668" rx="4.200" ry="8.200" fill="#f4f4f4" stroke="#111" stroke-width="1.400"/><path d="M331.800 667a4.200 8.200 0 0 1 8.400 0z" fill="#151515"/><path d="M334.600 661.800v5M337.400 661.800v5" stroke="#f2f2f2" stroke-width=".9"/><circle cx="336" cy="672.300" r="1.500" fill="#111"/></g><path d="M329 670.700L343.800 660.800" stroke="#222" stroke-width="1" stroke-dasharray="1 1.600"/></svg><div class="t tah" id="sb3" style="left:356px;top:662.300px;font-size:12.200px">Scale</div><div class="a" style="left:396px;top:657px;width:98px;height:22px;box-sizing:border-box;border:1px solid #b4b4b4;border-radius:2px;background:#fff"></div><div class="a" style="left:477px;top:658px;width:16px;height:20px;box-sizing:border-box;border-left:1px solid #c8c8c8;background:linear-gradient(#f6f6f6,#e0e0e0)"></div><svg style="left:480px;top:664px" width="12" height="8" viewBox="0 0 12 8" ><path d="M1.500 1.500h8l-4 4.500z" fill="#000"/></svg><div class="t tah" id="sb4" style="left:398px;top:663.300px;font-size:12.200px;letter-spacing:0.230px">:303,025,577</div><div class="t tah" id="sb5" style="left:503.500px;top:662.300px;font-size:12.200px">Rotation</div><div class="a" style="left:559px;top:655px;width:108px;height:27px;box-sizing:border-box;border:1px solid #b4b4b4;border-radius:2px;background:#fff"></div><div class="a" style="left:650px;top:656px;width:16px;height:25px;background:#f4f4f4"></div><svg style="left:652px;top:658px" width="14" height="22" viewBox="0 0 14 22" ><path d="M2.500 6h8l-4-4.500zM2.500 16h8l-4 4.500z" fill="#000"/></svg><div class="t tah" id="sb6" style="left:564px;top:663px;font-size:12.200px">0.0</div><div class="a" style="left:673px;top:661px;width:16px;height:15px;box-sizing:border-box;background:#fff;border:1px solid #8e8f8f"></div><svg style="left:673px;top:661px" width="16" height="15" viewBox="0 0 16 15" ><path d="M3 2.500l10 10m0-10l-10 10" stroke="#000" stroke-width="2.800"/></svg><div class="t tah" id="sb7" style="left:695.500px;top:662.300px;font-size:12.200px">Render</div><svg style="left:754px;top:658px" width="20" height="20" viewBox="0 0 20 20" ><defs><radialGradient id="crs" cx=".4" cy=".4" r=".7"><stop offset="0" stop-color="#c4c4c4"/><stop offset="1" stop-color="#808080"/></radialGradient></defs><circle cx="10" cy="10" r="9.300" fill="url(#crs)" stroke="#7a7a7a" stroke-width=".8"/><circle cx="10" cy="10" r="5.500" fill="none" stroke="#666" stroke-width=".9"/><ellipse cx="10" cy="10" rx="3" ry="9" fill="none" stroke="#6a6a6a" stroke-width=".8"/><path d="M1 10h18M10 1v18" stroke="#666" stroke-width=".9" fill="none"/><ellipse cx="10" cy="10" rx="9" ry="3" fill="none" stroke="#6a6a6a" stroke-width=".8"/></svg><div class="t tah" id="sb8" style="left:778px;top:662.300px;font-size:12.200px;letter-spacing:-0.150px">EPSG:4326</div><svg style="left:864px;top:658px" width="24" height="22" viewBox="0 0 24 22" ><path d="M11 1c5.800 0 10.200 3.400 10.200 8 0 3-2 5.600-5 7 .6 1.700 1.800 2.800 3.600 3.600-2.800.3-5.200-.6-6.800-2.600-.7.100-1.300.1-2 .1C5.300 17.100 1 13.600 1 9S5.300 1 11 1z" fill="#5f5f5f"/><circle cx="6.300" cy="9" r="1.500" fill="#fff"/><circle cx="11" cy="9" r="1.500" fill="#fff"/><circle cx="15.700" cy="9" r="1.500" fill="#fff"/></svg><svg style="left:908px;top:671px" width="14" height="14" viewBox="0 0 14 14" ><path d="M13 2L2 13M13 6L6 13M13 10l-3 3" stroke="#a0a0a0" stroke-width="1"/><path d="M13.800 2.800L2.800 13.800M13.800 6.800L6.800 13.800M13.800 10.800l-3 3" stroke="#fff" stroke-width="1"/></svg>
<div class="a" style="left:0;top:0;width:923px;height:686px;box-sizing:border-box;border:1px solid #1a1a1a;pointer-events:none"></div>
</body></html>
